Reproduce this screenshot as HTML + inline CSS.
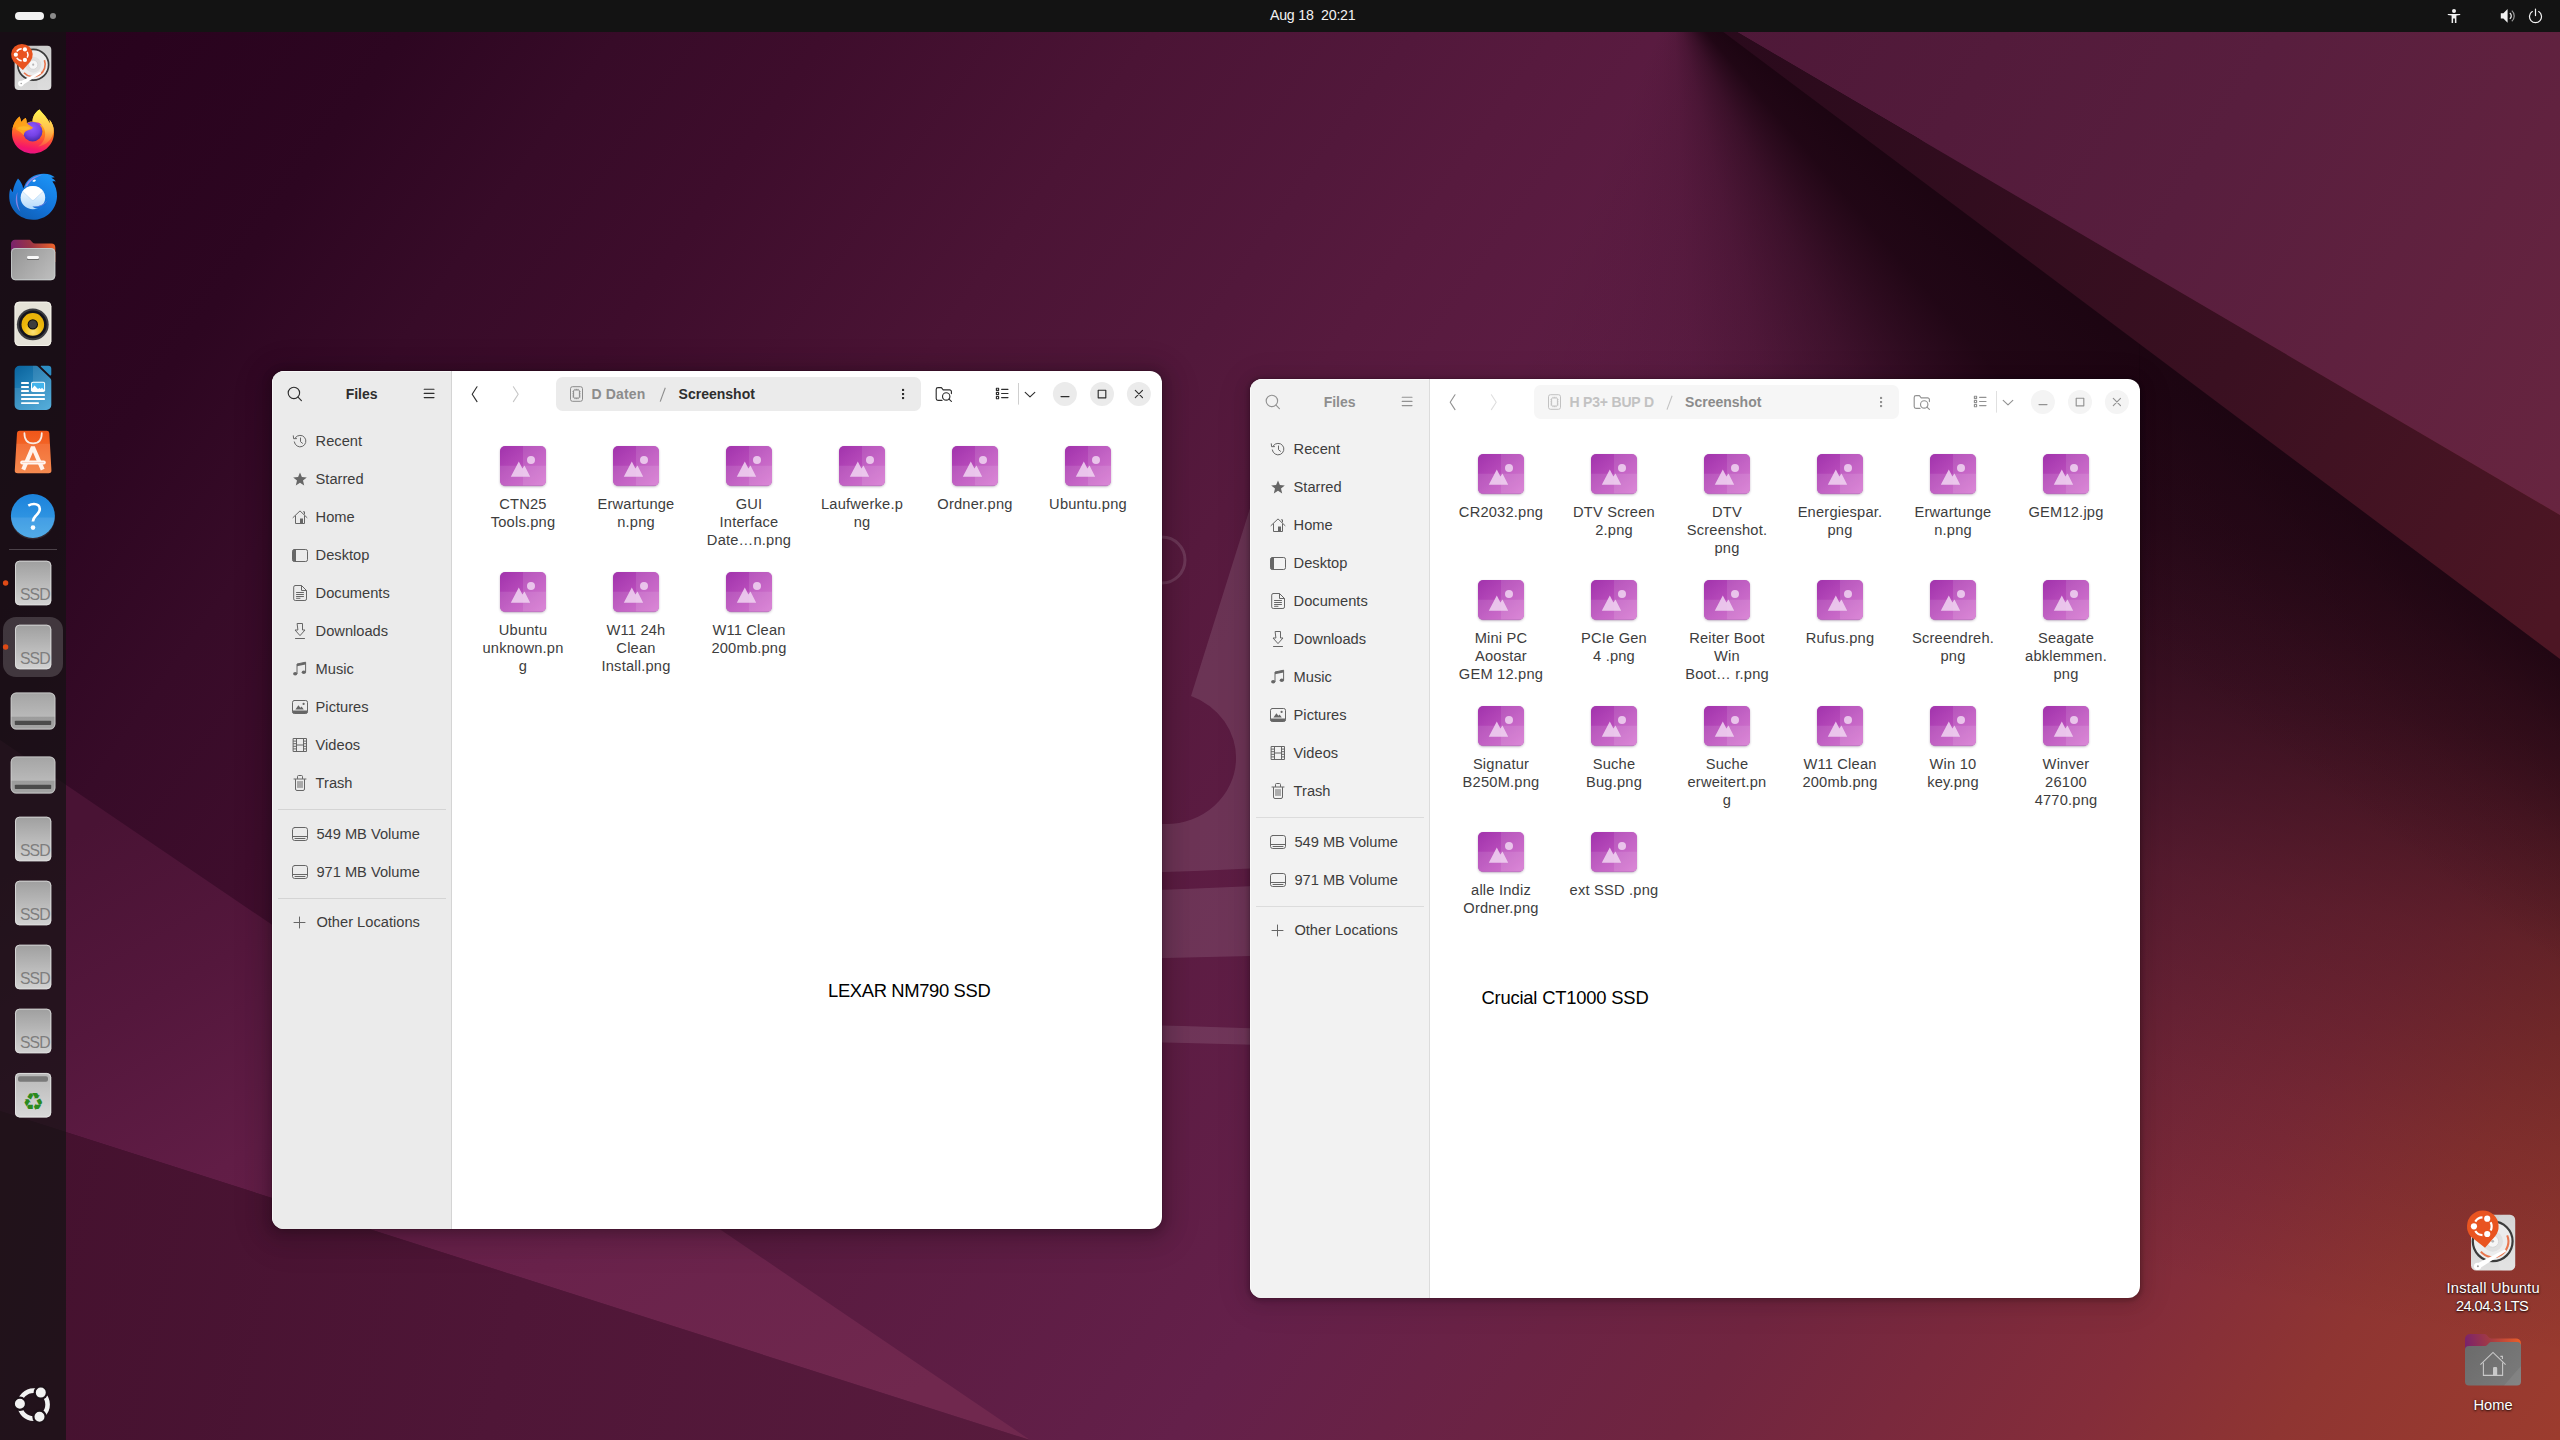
<!DOCTYPE html>
<html lang="en"><head><meta charset="utf-8"><title>Ubuntu Desktop - Files</title>
<style>
html,body{margin:0;padding:0}
body{width:2560px;height:1440px;overflow:hidden;position:relative;background:#4a1435;font-family:'Liberation Sans', sans-serif;-webkit-font-smoothing:antialiased}
#topbar{position:absolute;left:0;top:0;width:2560px;height:32px;background:#131313;z-index:50}
#dock{position:absolute;left:0;top:32px;width:66px;height:1408px;background:rgba(19,19,19,0.7);z-index:40}
#wbase{position:absolute;left:0;top:0;width:2560px;height:1440px;background:linear-gradient(125deg,#26021b 0%,#29031e 4.8%,#2d0621 12%,#370b28 18%,#3e0d2c 23.8%,#4b1435 33%,#52183b 40.3%,#571a3e 44.3%,#64204a 61.1%,#702540 75.1%,#842d3a 86.3%,#8f3532 91.9%,#9c3c2e 100%)}
#wfold{position:absolute;left:0;top:0;width:2560px;height:1440px;clip-path:polygon(1674px -45px,2140px 304px,2140px 1000px,600px 1000px,600px -45px);background:conic-gradient(from 120deg at 1674px -5px,rgba(26,4,16,.97) 0deg,rgba(26,4,16,.97) 6.83deg,rgba(26,4,16,.9) 19.4deg,rgba(26,4,16,.72) 26.8deg,rgba(26,4,16,.5) 34.8deg,rgba(26,4,16,.25) 46.8deg,rgba(26,4,16,.1) 57.8deg,rgba(26,4,16,.03) 71.8deg,rgba(26,4,16,0) 83.8deg,rgba(26,4,16,0) 360deg)}
.win{position:absolute;background:#fff;border-radius:12px;overflow:hidden}
.lab{position:absolute;width:120px;text-align:center;font-size:14.67px;line-height:18px;color:#3d3d3d;white-space:nowrap;letter-spacing:0.2px}
.note{position:absolute;color:#000;white-space:pre;line-height:24px;z-index:30}
</style></head>
<body>
<div id="wbase"></div>
<div id="wfold"></div>
<svg id="wall" width="2560" height="1440" viewBox="0 0 2560 1440" style="position:absolute;left:0;top:0">
<defs>
<linearGradient id="wur" gradientUnits="userSpaceOnUse" x1="1722" y1="32" x2="2560" y2="520">
<stop offset="0" stop-color="#4e1838"/>
<stop offset="0.5" stop-color="#581e3e"/>
<stop offset="1" stop-color="#682540"/>
</linearGradient>
<linearGradient id="wband" gradientUnits="userSpaceOnUse" x1="1722" y1="32" x2="2560" y2="600">
<stop offset="0" stop-color="#2a0a1c"/>
<stop offset="0.6" stop-color="#3a1021"/>
<stop offset="1" stop-color="#4d1624"/>
</linearGradient>
<linearGradient id="wfoldB" gradientUnits="userSpaceOnUse" x1="2350" y1="430" x2="2170" y2="1312">
<stop offset="0" stop-color="#1a0410" stop-opacity="0.9"/>
<stop offset="0.144" stop-color="#1a0410" stop-opacity="0.82"/>
<stop offset="0.3" stop-color="#1a0410" stop-opacity="0.66"/>
<stop offset="0.522" stop-color="#1a0410" stop-opacity="0.35"/>
<stop offset="0.744" stop-color="#1a0410" stop-opacity="0.15"/>
<stop offset="0.967" stop-color="#1a0410" stop-opacity="0"/>
</linearGradient>
<linearGradient id="wfoldC" gradientUnits="userSpaceOnUse" x1="2300" y1="464.6" x2="2150" y2="664.7">
<stop offset="0" stop-color="#1a0410" stop-opacity="0.7"/>
<stop offset="0.24" stop-color="#1a0410" stop-opacity="0.4"/>
<stop offset="0.6" stop-color="#1a0410" stop-opacity="0.15"/>
<stop offset="1" stop-color="#1a0410" stop-opacity="0"/>
</linearGradient>
<linearGradient id="wwedge" gradientUnits="userSpaceOnUse" x1="100" y1="820" x2="551" y2="1601">
<stop offset="0" stop-color="#491334"/>
<stop offset="0.2" stop-color="#54173c"/>
<stop offset="0.4" stop-color="#611d46"/>
<stop offset="0.673" stop-color="#69224b"/>
<stop offset="1" stop-color="#70284e"/>
</linearGradient>
<linearGradient id="wlow" gradientUnits="userSpaceOnUse" x1="0" y1="1200" x2="1030" y2="1440">
<stop offset="0" stop-color="#44112e"/>
<stop offset="0.5" stop-color="#4f1637"/>
<stop offset="1" stop-color="#581b3d"/>
</linearGradient>
</defs>
<polygon points="2139,300 2560,600 2560,1440 2139,1440" fill="url(#wfoldB)"/>
<polygon points="2139,300 2560,600 2560,1440 2139,1440" fill="url(#wfoldC)"/>
<!-- upper-right light area -->
<polygon points="1674,-5 2560,-5 2560,515" fill="url(#wur)"/>
<!-- dark band -->
<polygon points="1674,-5 2560,515 2560,659" fill="url(#wband)"/>
<!-- bottom-left wedge -->
<polygon points="0,740 1030,1440 0,1111" fill="url(#wwedge)"/>
<polygon points="0,1111 1030,1440 0,1440" fill="url(#wlow)"/>
<!-- numbat fragments between windows -->
<g fill="#ffffff" fill-opacity="0.11">
<path d="M1262,470 L1191,696 A70,66 0 0 1 1236,760 A70,66 0 0 1 1165,824 L1100,824 L1100,874 Q1200,872 1300,866 L1300,470 Z"/>
<path d="M1100,892 Q1200,889 1300,884 L1300,955 Q1200,957 1100,960 Z"/>
<path d="M1100,1024 Q1200,1026 1300,1030 L1300,1046 Q1200,1043 1100,1041 Z"/>
</g>
<circle cx="1162" cy="560" r="23" fill="none" stroke="#ffffff" stroke-opacity="0.13" stroke-width="3"/>
</svg>

<svg width="0" height="0" style="position:absolute"><defs><linearGradient id="gimg" x1="0" y1="0" x2="1" y2="1"><stop offset="0" stop-color="#a133ac"/><stop offset="1" stop-color="#d268cc"/></linearGradient></defs></svg>
<svg width="140" height="200" viewBox="2430 1200 140 200" style="position:absolute;left:2430px;top:1200px">
<defs>
<linearGradient id="gdisk2" x1="0" y1="0" x2="0" y2="1"><stop offset="0" stop-color="#cfcfcf"/><stop offset="1" stop-color="#e0e0e0"/></linearGradient>
<linearGradient id="ghback" gradientUnits="userSpaceOnUse" x1="2465" y1="1350" x2="2521" y2="1338"><stop offset="0" stop-color="#77216f"/><stop offset="0.45" stop-color="#a23a44"/><stop offset="1" stop-color="#ee5f28"/></linearGradient>
<linearGradient id="ghfront" gradientUnits="userSpaceOnUse" x1="2468" y1="1344" x2="2518" y2="1386"><stop offset="0" stop-color="#6b6b6b"/><stop offset="1" stop-color="#7b7b7b"/></linearGradient>
</defs>
<g>
<rect x="2471" y="1214.8" width="44.2" height="55.8" rx="5.2" fill="url(#gdisk2)"/>
<rect x="2498.4" y="1214.8" width="16.8" height="55.8" rx="5.2" fill="#ffffff" fill-opacity="0.12"/>
<circle cx="2492.7" cy="1241.3" r="19.9" fill="#ececec" stroke="#3b3b3b" stroke-width="2.20"/>
<circle cx="2492.7" cy="1241.3" r="10.35" fill="#e0e0e0"/>
<circle cx="2492.7" cy="1241.3" r="5.97" fill="#f6f6f6" stroke="#d2d2d2" stroke-width="0.8"/>
<circle cx="2492.7" cy="1241.3" r="1.39" fill="#b5b5b5"/>
<path d="M2507.2,1235.3 A15.7,15.7 0 0 1 2480.8,1251.6" fill="none" stroke="#e9764e" stroke-width="2.07"/>
<path d="M2478.95,1268.65 L2506.31,1251.27 L2505.09,1249.13 L2476.25,1263.95 Z" fill="#ffffff"/>
<circle cx="2477.6" cy="1266.3" r="3.62" fill="#ffffff"/>
<circle cx="2477.9" cy="1266.3" r="0.97" fill="#9a9a9a"/>
<path d="M2470.70,1236.46 A15.8,15.8 0 1 1 2494.90,1236.46 L2485,1247.8 Z" fill="#e95420"/>
<path d="M2475.30,1221.61 A8.85,8.85 0 0 1 2482.49,1217.46 M2490.61,1222.15 A8.85,8.85 0 0 1 2490.61,1230.45 M2482.49,1235.14 A8.85,8.85 0 0 1 2475.30,1230.99 " fill="none" stroke="#ffffff" stroke-width="2.21"/>
<circle cx="2473.95" cy="1226.30" r="3.08" fill="#fff"/><circle cx="2487.22" cy="1218.64" r="3.08" fill="#fff"/><circle cx="2487.22" cy="1233.96" r="3.08" fill="#fff"/>
</g>
<g>
<path d="M2465,1339 a5,5 0 0 1 5,-5 H2484 c1.6,0 2.4,0.5 3.2,1.5 l1.6,1.8 c0.7,0.8 1.4,1.1 2.6,1.1 H2516 a5,5 0 0 1 5,5 V1362 H2465 Z" fill="url(#ghback)"/>
<path d="M2465,1350 a4,4 0 0 1 4,-4 H2484.4 c1.4,0 2.2,-0.4 3,-1.2 l1.4,-1.5 c0.8,-0.9 1.6,-1.3 3,-1.3 H2517 a4,4 0 0 1 4,4 V1381.6 a4,4 0 0 1 -4,4 H2469 a4,4 0 0 1 -4,-4 Z" fill="url(#ghfront)"/>
<path d="M2521,1366 V1381.6 a4,4 0 0 1 -4,4 H2504 Z" fill="#ffffff" fill-opacity="0.07"/>
<g fill="none" stroke="#c9c9c9" stroke-width="1.1" stroke-linejoin="miter">
<path d="M2480.4,1364.6 L2493,1352.4 L2505.6,1364.6"/>
<path d="M2483.4,1362.4 V1375.4 H2502.6 V1362.4"/>
<path d="M2500.4,1356.4 H2502.4 V1359"/>
</g>
<path d="M2493,1375.4 V1368.2 a1.2,1.2 0 0 1 1.2,-1.2 H2496 a1.2,1.2 0 0 1 1.2,1.2 V1375.4 Z" fill="#c9c9c9"/>
</g>
</svg>
<div style="position:absolute;top:1279.12px;line-height:18px;font-size:14.67px;font-weight:400;color:#ffffff;white-space:pre;letter-spacing:0.27px;left:2293.20px;width:400px;text-align:center;text-shadow:0 1px 2px rgba(0,0,0,0.75),0 0 3px rgba(0,0,0,0.45);">Install Ubuntu</div>
<div style="position:absolute;top:1297.02px;line-height:18px;font-size:14.67px;font-weight:400;color:#ffffff;white-space:pre;letter-spacing:-0.6px;left:2292.10px;width:400px;text-align:center;text-shadow:0 1px 2px rgba(0,0,0,0.75),0 0 3px rgba(0,0,0,0.45);">24.04.3 LTS</div>
<div style="position:absolute;top:1396.02px;line-height:18px;font-size:14.67px;font-weight:400;color:#ffffff;white-space:pre;left:2293.00px;width:400px;text-align:center;text-shadow:0 1px 2px rgba(0,0,0,0.75),0 0 3px rgba(0,0,0,0.45);">Home</div>
<div class="win" style="left:1250px;top:379px;width:890px;height:919px;box-shadow:0 0 0 1px rgba(0,0,0,0.06), 0 1px 3px 3px rgba(0,0,0,0.12), 0 2px 14px 5px rgba(0,0,0,0.08), 0 4px 28px 12px rgba(0,0,0,0.05);z-index:10">
<div style="position:absolute;left:0;top:0;width:179px;height:919px;background:#f2f2f2;border-right:1px solid #dcdcdc;box-shadow:inset 1px 1px 0 rgba(255,255,255,0.6)"></div>
<svg width="890" height="46" viewBox="0 0 890 46" style="position:absolute;left:0;top:0">
<circle cx="21.9" cy="21.9" r="5.7" fill="none" stroke="#929292" stroke-width="1.15" stroke-linecap="round" stroke-linejoin="round"/><path d="M26,26.2 L29.4,29.6" fill="none" stroke="#929292" stroke-width="1.15" stroke-linecap="round" stroke-linejoin="round" stroke-width="1.5"/>
<path d="M152.2,18.2 H162 M152.2,22.4 H162 M152.2,26.6 H162" fill="none" stroke="#929292" stroke-width="1.15" stroke-linecap="round" stroke-linejoin="round" stroke-width="1.05"/>
<path d="M205,15.8 L200.2,23.2 L205,30.6" fill="none" stroke="#929292" stroke-width="1.15" stroke-linecap="round" stroke-linejoin="round" stroke-width="1.1"/>
<path d="M241.4,15.8 L246.2,23.2 L241.4,30.6" fill="none" stroke="#dedede" stroke-width="1.1" stroke-linecap="round" stroke-linejoin="round"/>
<rect x="284" y="6" width="365" height="34" rx="6.5" fill="#f6f6f6"/>
<g fill="none" stroke="#c2c2c2" stroke-width="1">
<rect x="298.5" y="15.7" width="12" height="14.6" rx="2"/>
<rect x="301.6" y="19" width="5.8" height="8" rx="0.8"/>
<path d="M300.4,20.5 h1.2 M300.4,22.3 h1.2 M300.4,24.1 h1.2 M300.4,25.9 h1.2 M307.4,20.5 h1.2 M307.4,22.3 h1.2 M307.4,24.1 h1.2 M307.4,25.9 h1.2 M303,17.8 v1.2 M304.5,17.8 v1.2 M306,17.8 v1.2 M303,27 v1.2 M304.5,27 v1.2 M306,27 v1.2" stroke-width="0.8"/>
</g>
<path d="M422.1,16.8 L417.0,30.6" fill="none" stroke="#c2c2c2" stroke-width="1.1"/>
<g fill="#929292"><rect x="630" y="17.9" width="2.1" height="2.1"/><rect x="630" y="22" width="2.1" height="2.1"/><rect x="630" y="26" width="2.1" height="2.1"/></g>
<path d="M670,29.4 H666 a1.8,1.8 0 0 1 -1.8,-1.8 V18.4 a1.8,1.8 0 0 1 1.8,-1.8 H669.4 l1.8,2.2 H677.6 a1.8,1.8 0 0 1 1.8,1.8 V22.6" fill="none" stroke="#929292" stroke-width="1.15" stroke-linecap="round" stroke-linejoin="round" stroke-width="1.05"/>
<circle cx="674.2" cy="25.4" r="3.7" fill="none" stroke="#929292" stroke-width="1.15" stroke-linecap="round" stroke-linejoin="round" stroke-width="1.05"/><path d="M677,28.2 L679.4,30.4" fill="none" stroke="#929292" stroke-width="1.15" stroke-linecap="round" stroke-linejoin="round" stroke-width="1.05"/>
<g fill="none" stroke="#929292" stroke-width="1.15" stroke-linecap="round" stroke-linejoin="round" stroke-width="1.0"><rect x="724.4" y="17.2" width="2.2" height="2.2"/><rect x="724.4" y="21.4" width="2.2" height="2.2"/><rect x="724.4" y="25.5" width="2.2" height="2.2"/><path d="M729.6,18.3 H736 M729.6,22.5 H736 M729.6,26.6 H736"/></g>
<rect x="746" y="12" width="1" height="21.6" fill="#e0e0e0"/>
<path d="M753.2,21.4 L758,25.8 L762.8,21.4" fill="none" stroke="#929292" stroke-width="1.15" stroke-linecap="round" stroke-linejoin="round" stroke-width="1.1"/>
<circle cx="792.9" cy="23" r="12" fill="#f4f4f4"/><circle cx="830" cy="23" r="12" fill="#f4f4f4"/><circle cx="866.9" cy="23" r="12" fill="#f4f4f4"/>
<path d="M789,25.6 H797" fill="none" stroke="#929292" stroke-width="1.15" stroke-linecap="round" stroke-linejoin="round" stroke-width="1.1"/>
<rect x="826.2" y="19.2" width="7.6" height="7.6" fill="none" stroke="#929292" stroke-width="1.15" stroke-linecap="round" stroke-linejoin="round" stroke-width="1.1" stroke-linejoin="miter"/>
<path d="M863.3,19.4 L870.5,26.6 M870.5,19.4 L863.3,26.6" fill="none" stroke="#929292" stroke-width="1.15" stroke-linecap="round" stroke-linejoin="round" stroke-width="1.15"/>
</svg>
<div style="position:absolute;top:13.75px;line-height:18px;font-size:14px;font-weight:700;color:#8e8e8e;white-space:pre;left:-110.40px;width:400px;text-align:center;">Files</div>
<div style="position:absolute;top:13.95px;line-height:18px;font-size:14px;font-weight:700;color:#c2c2c2;white-space:pre;letter-spacing:-0.2px;left:319.50px;">H P3+ BUP D</div>
<div style="position:absolute;top:13.95px;line-height:18px;font-size:14px;font-weight:700;color:#8b8b8b;white-space:pre;left:435.10px;">Screenshot</div>
<div style="position:absolute;left:20px;top:62px;width:16px;height:16px"><svg width="16" height="16" viewBox="0 0 16 16" style="position:absolute;left:0;top:0;overflow:visible"><path d="M2.3,8.9 A5.8,5.8 0 1 0 3.4,4.6" fill="none" stroke="#666666" stroke-width="1" stroke-linecap="round" stroke-linejoin="round"/><path d="M1.3,2.8 L1.6,5.7 L4.5,5.6" fill="none" stroke="#666666" stroke-width="1" stroke-linecap="round" stroke-linejoin="round"/><path d="M8.5,5 V8.7 L10.5,10.3" fill="none" stroke="#666666" stroke-width="1" stroke-linecap="round" stroke-linejoin="round"/></svg></div>
<div style="position:absolute;top:60.72px;line-height:18px;font-size:14.67px;font-weight:400;color:#3d3d3d;white-space:pre;left:43.60px;">Recent</div>
<div style="position:absolute;left:20px;top:100px;width:16px;height:16px"><svg width="16" height="16" viewBox="0 0 16 16" style="position:absolute;left:0;top:0;overflow:visible"><path d="M8,1.5 L9.9,6.1 L14.8,6.4 L11,9.6 L12.2,14.4 L8,11.8 L3.8,14.4 L5,9.6 L1.2,6.4 L6.1,6.1 Z" fill="#666666"/></svg></div>
<div style="position:absolute;top:98.72px;line-height:18px;font-size:14.67px;font-weight:400;color:#3d3d3d;white-space:pre;left:43.60px;">Starred</div>
<div style="position:absolute;left:20px;top:138px;width:16px;height:16px"><svg width="16" height="16" viewBox="0 0 16 16" style="position:absolute;left:0;top:0;overflow:visible"><path d="M1,8.6 L8,1.9 L15,8.6" fill="none" stroke="#666666" stroke-width="1" stroke-linecap="round" stroke-linejoin="round"/><path d="M3.5,7 V14.5 H12.5 V7" fill="none" stroke="#666666" stroke-width="1" stroke-linecap="round" stroke-linejoin="round"/><rect x="8" y="9.5" width="3" height="5" fill="#666666"/><path d="M11.5,2.8 H12.5 V5" fill="none" stroke="#666666" stroke-width="1" stroke-linecap="round" stroke-linejoin="round"/></svg></div>
<div style="position:absolute;top:136.72px;line-height:18px;font-size:14.67px;font-weight:400;color:#3d3d3d;white-space:pre;left:43.60px;">Home</div>
<div style="position:absolute;left:20px;top:176px;width:16px;height:16px"><svg width="16" height="16" viewBox="0 0 16 16" style="position:absolute;left:0;top:0;overflow:visible"><rect x="0.5" y="2.5" width="15" height="12" rx="1.8" fill="none" stroke="#666666" stroke-width="1" stroke-linecap="round" stroke-linejoin="round"/><path d="M0.5,4.3 a1.8,1.8 0 0 1 1.8,-1.8 H4 V14.5 H2.3 a1.8,1.8 0 0 1 -1.8,-1.8 Z" fill="#666666"/></svg></div>
<div style="position:absolute;top:174.72px;line-height:18px;font-size:14.67px;font-weight:400;color:#3d3d3d;white-space:pre;left:43.60px;">Desktop</div>
<div style="position:absolute;left:20px;top:214px;width:16px;height:16px"><svg width="16" height="16" viewBox="0 0 16 16" style="position:absolute;left:0;top:0;overflow:visible"><path d="M3.3,0.5 H9.5 L14.5,5.5 V13.9 a1.6,1.6 0 0 1 -1.6,1.6 H3.3 a1.6,1.6 0 0 1 -1.6,-1.6 V2.1 a1.6,1.6 0 0 1 1.6,-1.6 Z" fill="none" stroke="#666666" stroke-width="1" stroke-linecap="round" stroke-linejoin="round"/><path d="M9.5,0.8 V5.5 H14.2" fill="none" stroke="#666666" stroke-width="1" stroke-linecap="round" stroke-linejoin="round"/><path d="M4.5,7.5 H11.5 M4.5,9.5 H11.5 M4.5,11.5 H11.5 M4.5,13.3 H8" fill="none" stroke="#666666" stroke-width="1" stroke-linecap="round" stroke-linejoin="round" stroke-width="0.9"/></svg></div>
<div style="position:absolute;top:212.72px;line-height:18px;font-size:14.67px;font-weight:400;color:#3d3d3d;white-space:pre;left:43.60px;">Documents</div>
<div style="position:absolute;left:20px;top:252px;width:16px;height:16px"><svg width="16" height="16" viewBox="0 0 16 16" style="position:absolute;left:0;top:0;overflow:visible"><path d="M5.5,0.5 H10.5 V7 H13 L8,12.6 L3,7 H5.5 Z" fill="none" stroke="#666666" stroke-width="1" stroke-linecap="round" stroke-linejoin="round"/><path d="M3.5,15.5 H12.5" fill="none" stroke="#666666" stroke-width="1" stroke-linecap="round" stroke-linejoin="round"/></svg></div>
<div style="position:absolute;top:250.72px;line-height:18px;font-size:14.67px;font-weight:400;color:#3d3d3d;white-space:pre;left:43.60px;">Downloads</div>
<div style="position:absolute;left:20px;top:290px;width:16px;height:16px"><svg width="16" height="16" viewBox="0 0 16 16" style="position:absolute;left:0;top:0;overflow:visible"><path d="M5,12.6 V3 L13.6,1.2 V11" fill="none" stroke="#666666" stroke-width="1" stroke-linecap="round" stroke-linejoin="round" stroke-width="1.2"/><path d="M5,3 L13.6,1.2 V3.4 L5,5.2 Z" fill="#666666"/><ellipse cx="3.2" cy="12.8" rx="2.1" ry="1.7" fill="#666666"/><ellipse cx="11.8" cy="11.3" rx="2.1" ry="1.7" fill="#666666"/></svg></div>
<div style="position:absolute;top:288.72px;line-height:18px;font-size:14.67px;font-weight:400;color:#3d3d3d;white-space:pre;left:43.60px;">Music</div>
<div style="position:absolute;left:20px;top:328px;width:16px;height:16px"><svg width="16" height="16" viewBox="0 0 16 16" style="position:absolute;left:0;top:0;overflow:visible"><rect x="0.5" y="1.5" width="15" height="13" rx="1.8" fill="none" stroke="#666666" stroke-width="1" stroke-linecap="round" stroke-linejoin="round"/><path d="M0.5,11.5 H15.5 V12.7 a1.8,1.8 0 0 1 -1.8,1.8 H2.3 a1.8,1.8 0 0 1 -1.8,-1.8 Z" fill="#666666"/><path d="M3.4,10.4 L6.4,6.2 L8.4,8.8 L9.6,7.6 L11.8,10.4 Z" fill="#666666"/><circle cx="11.6" cy="4.9" r="1.1" fill="#666666"/></svg></div>
<div style="position:absolute;top:326.72px;line-height:18px;font-size:14.67px;font-weight:400;color:#3d3d3d;white-space:pre;left:43.60px;">Pictures</div>
<div style="position:absolute;left:20px;top:366px;width:16px;height:16px"><svg width="16" height="16" viewBox="0 0 16 16" style="position:absolute;left:0;top:0;overflow:visible"><rect x="1.5" y="1.5" width="13" height="13" fill="none" stroke="#666666" stroke-width="1" stroke-linecap="round" stroke-linejoin="round"/><path d="M4.5,1.5 V14.5 M11.5,1.5 V14.5 M4.5,8 H11.5" fill="none" stroke="#666666" stroke-width="1" stroke-linecap="round" stroke-linejoin="round"/><path d="M1.5,4.1 H4.5 M1.5,6.7 H4.5 M1.5,9.3 H4.5 M1.5,11.9 H4.5 M11.5,4.1 H14.5 M11.5,6.7 H14.5 M11.5,9.3 H14.5 M11.5,11.9 H14.5" fill="none" stroke="#666666" stroke-width="1" stroke-linecap="round" stroke-linejoin="round" stroke-width="0.9"/></svg></div>
<div style="position:absolute;top:364.72px;line-height:18px;font-size:14.67px;font-weight:400;color:#3d3d3d;white-space:pre;left:43.60px;">Videos</div>
<div style="position:absolute;left:20px;top:404px;width:16px;height:16px"><svg width="16" height="16" viewBox="0 0 16 16" style="position:absolute;left:0;top:0;overflow:visible"><path d="M3.5,4.5 V14 a1.5,1.5 0 0 0 1.5,1.5 H11 a1.5,1.5 0 0 0 1.5,-1.5 V4.5" fill="none" stroke="#666666" stroke-width="1" stroke-linecap="round" stroke-linejoin="round"/><path d="M2,4 H14" fill="none" stroke="#666666" stroke-width="1" stroke-linecap="round" stroke-linejoin="round" stroke-width="1.4"/><path d="M5.5,3.5 V1.5 a1,1 0 0 1 1,-1 H9.5 a1,1 0 0 1 1,1 V3.5" fill="none" stroke="#666666" stroke-width="1" stroke-linecap="round" stroke-linejoin="round"/><path d="M6,6.5 V12.5 M8,6.5 V12.5 M10,6.5 V12.5" fill="none" stroke="#666666" stroke-width="1" stroke-linecap="round" stroke-linejoin="round"/></svg></div>
<div style="position:absolute;top:402.72px;line-height:18px;font-size:14.67px;font-weight:400;color:#3d3d3d;white-space:pre;left:43.60px;">Trash</div>
<div style="position:absolute;left:20px;top:455px;width:16px;height:16px"><svg width="16" height="16" viewBox="0 0 16 16" style="position:absolute;left:0;top:0;overflow:visible"><rect x="0.5" y="1.5" width="15" height="13" rx="2.2" fill="none" stroke="#666666" stroke-width="1" stroke-linecap="round" stroke-linejoin="round"/><path d="M0.5,10.5 H15.5" fill="none" stroke="#666666" stroke-width="1" stroke-linecap="round" stroke-linejoin="round"/><path d="M3,12.5 H13" fill="none" stroke="#666666" stroke-width="1" stroke-linecap="round" stroke-linejoin="round" stroke-width="0.9"/></svg></div>
<div style="position:absolute;top:453.62px;line-height:18px;font-size:14.67px;font-weight:400;color:#3d3d3d;white-space:pre;left:44.40px;">549 MB Volume</div>
<div style="position:absolute;left:20px;top:493px;width:16px;height:16px"><svg width="16" height="16" viewBox="0 0 16 16" style="position:absolute;left:0;top:0;overflow:visible"><rect x="0.5" y="1.5" width="15" height="13" rx="2.2" fill="none" stroke="#666666" stroke-width="1" stroke-linecap="round" stroke-linejoin="round"/><path d="M0.5,10.5 H15.5" fill="none" stroke="#666666" stroke-width="1" stroke-linecap="round" stroke-linejoin="round"/><path d="M3,12.5 H13" fill="none" stroke="#666666" stroke-width="1" stroke-linecap="round" stroke-linejoin="round" stroke-width="0.9"/></svg></div>
<div style="position:absolute;top:491.62px;line-height:18px;font-size:14.67px;font-weight:400;color:#3d3d3d;white-space:pre;left:44.40px;">971 MB Volume</div>
<div style="position:absolute;left:20px;top:544px;width:16px;height:16px"><svg width="16" height="16" viewBox="0 0 16 16" style="position:absolute;left:0;top:0;overflow:visible"><path d="M7.5,2 V13 M2,7.5 H13" fill="none" stroke="#666666" stroke-width="1" stroke-linecap="round" stroke-linejoin="round" stroke-linecap="butt"/></svg></div>
<div style="position:absolute;top:542.42px;line-height:18px;font-size:14.67px;font-weight:400;color:#3d3d3d;white-space:pre;left:44.40px;">Other Locations</div>
<div style="position:absolute;left:6px;top:438px;width:168px;height:1px;background:#dcdcdc"></div>
<div style="position:absolute;left:6px;top:527px;width:168px;height:1px;background:#dcdcdc"></div>
<div style="position:absolute;left:228px;top:75px;width:46px;height:40px;filter:drop-shadow(0 1px 1.2px rgba(60,20,70,0.28))"><svg width="52" height="48" viewBox="-3 -3 52 48" style="position:absolute;left:-3px;top:-3px">
<rect x="0.6" y="1.4" width="44.8" height="39.2" rx="5.4" fill="#5a1a66" fill-opacity="0.14"/>
<rect x="0" y="0.5" width="46" height="39.6" rx="5.2" fill="#a535ad" fill-opacity="0.5"/>
<rect x="0" y="0" width="46" height="39.6" rx="5" fill="url(#gimg)"/>
<path d="M23,0 H41 a5,5 0 0 1 5,5 V34.6 a5,5 0 0 1 -5,5 H23 Z" fill="#fff" fill-opacity="0.11"/>
<path d="M0,19.8 H46 V34.6 a5,5 0 0 1 -5,5 H5 a5,5 0 0 1 -5,-5 Z" fill="#fff" fill-opacity="0.11"/>
<path d="M10.8,30.8 L18.8,15.6 L22.4,22.6 L24.5,19.6 L30.2,30.8 Z" fill="#f0d4f1" fill-opacity="0.86"/>
<circle cx="31" cy="14" r="4" fill="#f0d4f1" fill-opacity="0.86"/>
</svg></div>
<div class="lab" style="left:191px;top:123.9px">CR2032.png</div>
<div style="position:absolute;left:341px;top:75px;width:46px;height:40px;filter:drop-shadow(0 1px 1.2px rgba(60,20,70,0.28))"><svg width="52" height="48" viewBox="-3 -3 52 48" style="position:absolute;left:-3px;top:-3px">
<rect x="0.6" y="1.4" width="44.8" height="39.2" rx="5.4" fill="#5a1a66" fill-opacity="0.14"/>
<rect x="0" y="0.5" width="46" height="39.6" rx="5.2" fill="#a535ad" fill-opacity="0.5"/>
<rect x="0" y="0" width="46" height="39.6" rx="5" fill="url(#gimg)"/>
<path d="M23,0 H41 a5,5 0 0 1 5,5 V34.6 a5,5 0 0 1 -5,5 H23 Z" fill="#fff" fill-opacity="0.11"/>
<path d="M0,19.8 H46 V34.6 a5,5 0 0 1 -5,5 H5 a5,5 0 0 1 -5,-5 Z" fill="#fff" fill-opacity="0.11"/>
<path d="M10.8,30.8 L18.8,15.6 L22.4,22.6 L24.5,19.6 L30.2,30.8 Z" fill="#f0d4f1" fill-opacity="0.86"/>
<circle cx="31" cy="14" r="4" fill="#f0d4f1" fill-opacity="0.86"/>
</svg></div>
<div class="lab" style="left:304px;top:123.9px">DTV Screen<br>2.png</div>
<div style="position:absolute;left:454px;top:75px;width:46px;height:40px;filter:drop-shadow(0 1px 1.2px rgba(60,20,70,0.28))"><svg width="52" height="48" viewBox="-3 -3 52 48" style="position:absolute;left:-3px;top:-3px">
<rect x="0.6" y="1.4" width="44.8" height="39.2" rx="5.4" fill="#5a1a66" fill-opacity="0.14"/>
<rect x="0" y="0.5" width="46" height="39.6" rx="5.2" fill="#a535ad" fill-opacity="0.5"/>
<rect x="0" y="0" width="46" height="39.6" rx="5" fill="url(#gimg)"/>
<path d="M23,0 H41 a5,5 0 0 1 5,5 V34.6 a5,5 0 0 1 -5,5 H23 Z" fill="#fff" fill-opacity="0.11"/>
<path d="M0,19.8 H46 V34.6 a5,5 0 0 1 -5,5 H5 a5,5 0 0 1 -5,-5 Z" fill="#fff" fill-opacity="0.11"/>
<path d="M10.8,30.8 L18.8,15.6 L22.4,22.6 L24.5,19.6 L30.2,30.8 Z" fill="#f0d4f1" fill-opacity="0.86"/>
<circle cx="31" cy="14" r="4" fill="#f0d4f1" fill-opacity="0.86"/>
</svg></div>
<div class="lab" style="left:417px;top:123.9px">DTV<br>Screenshot.<br>png</div>
<div style="position:absolute;left:567px;top:75px;width:46px;height:40px;filter:drop-shadow(0 1px 1.2px rgba(60,20,70,0.28))"><svg width="52" height="48" viewBox="-3 -3 52 48" style="position:absolute;left:-3px;top:-3px">
<rect x="0.6" y="1.4" width="44.8" height="39.2" rx="5.4" fill="#5a1a66" fill-opacity="0.14"/>
<rect x="0" y="0.5" width="46" height="39.6" rx="5.2" fill="#a535ad" fill-opacity="0.5"/>
<rect x="0" y="0" width="46" height="39.6" rx="5" fill="url(#gimg)"/>
<path d="M23,0 H41 a5,5 0 0 1 5,5 V34.6 a5,5 0 0 1 -5,5 H23 Z" fill="#fff" fill-opacity="0.11"/>
<path d="M0,19.8 H46 V34.6 a5,5 0 0 1 -5,5 H5 a5,5 0 0 1 -5,-5 Z" fill="#fff" fill-opacity="0.11"/>
<path d="M10.8,30.8 L18.8,15.6 L22.4,22.6 L24.5,19.6 L30.2,30.8 Z" fill="#f0d4f1" fill-opacity="0.86"/>
<circle cx="31" cy="14" r="4" fill="#f0d4f1" fill-opacity="0.86"/>
</svg></div>
<div class="lab" style="left:530px;top:123.9px">Energiespar.<br>png</div>
<div style="position:absolute;left:680px;top:75px;width:46px;height:40px;filter:drop-shadow(0 1px 1.2px rgba(60,20,70,0.28))"><svg width="52" height="48" viewBox="-3 -3 52 48" style="position:absolute;left:-3px;top:-3px">
<rect x="0.6" y="1.4" width="44.8" height="39.2" rx="5.4" fill="#5a1a66" fill-opacity="0.14"/>
<rect x="0" y="0.5" width="46" height="39.6" rx="5.2" fill="#a535ad" fill-opacity="0.5"/>
<rect x="0" y="0" width="46" height="39.6" rx="5" fill="url(#gimg)"/>
<path d="M23,0 H41 a5,5 0 0 1 5,5 V34.6 a5,5 0 0 1 -5,5 H23 Z" fill="#fff" fill-opacity="0.11"/>
<path d="M0,19.8 H46 V34.6 a5,5 0 0 1 -5,5 H5 a5,5 0 0 1 -5,-5 Z" fill="#fff" fill-opacity="0.11"/>
<path d="M10.8,30.8 L18.8,15.6 L22.4,22.6 L24.5,19.6 L30.2,30.8 Z" fill="#f0d4f1" fill-opacity="0.86"/>
<circle cx="31" cy="14" r="4" fill="#f0d4f1" fill-opacity="0.86"/>
</svg></div>
<div class="lab" style="left:643px;top:123.9px">Erwartunge<br>n.png</div>
<div style="position:absolute;left:793px;top:75px;width:46px;height:40px;filter:drop-shadow(0 1px 1.2px rgba(60,20,70,0.28))"><svg width="52" height="48" viewBox="-3 -3 52 48" style="position:absolute;left:-3px;top:-3px">
<rect x="0.6" y="1.4" width="44.8" height="39.2" rx="5.4" fill="#5a1a66" fill-opacity="0.14"/>
<rect x="0" y="0.5" width="46" height="39.6" rx="5.2" fill="#a535ad" fill-opacity="0.5"/>
<rect x="0" y="0" width="46" height="39.6" rx="5" fill="url(#gimg)"/>
<path d="M23,0 H41 a5,5 0 0 1 5,5 V34.6 a5,5 0 0 1 -5,5 H23 Z" fill="#fff" fill-opacity="0.11"/>
<path d="M0,19.8 H46 V34.6 a5,5 0 0 1 -5,5 H5 a5,5 0 0 1 -5,-5 Z" fill="#fff" fill-opacity="0.11"/>
<path d="M10.8,30.8 L18.8,15.6 L22.4,22.6 L24.5,19.6 L30.2,30.8 Z" fill="#f0d4f1" fill-opacity="0.86"/>
<circle cx="31" cy="14" r="4" fill="#f0d4f1" fill-opacity="0.86"/>
</svg></div>
<div class="lab" style="left:756px;top:123.9px">GEM12.jpg</div>
<div style="position:absolute;left:228px;top:201px;width:46px;height:40px;filter:drop-shadow(0 1px 1.2px rgba(60,20,70,0.28))"><svg width="52" height="48" viewBox="-3 -3 52 48" style="position:absolute;left:-3px;top:-3px">
<rect x="0.6" y="1.4" width="44.8" height="39.2" rx="5.4" fill="#5a1a66" fill-opacity="0.14"/>
<rect x="0" y="0.5" width="46" height="39.6" rx="5.2" fill="#a535ad" fill-opacity="0.5"/>
<rect x="0" y="0" width="46" height="39.6" rx="5" fill="url(#gimg)"/>
<path d="M23,0 H41 a5,5 0 0 1 5,5 V34.6 a5,5 0 0 1 -5,5 H23 Z" fill="#fff" fill-opacity="0.11"/>
<path d="M0,19.8 H46 V34.6 a5,5 0 0 1 -5,5 H5 a5,5 0 0 1 -5,-5 Z" fill="#fff" fill-opacity="0.11"/>
<path d="M10.8,30.8 L18.8,15.6 L22.4,22.6 L24.5,19.6 L30.2,30.8 Z" fill="#f0d4f1" fill-opacity="0.86"/>
<circle cx="31" cy="14" r="4" fill="#f0d4f1" fill-opacity="0.86"/>
</svg></div>
<div class="lab" style="left:191px;top:249.9px">Mini PC<br>Aoostar<br>GEM 12.png</div>
<div style="position:absolute;left:341px;top:201px;width:46px;height:40px;filter:drop-shadow(0 1px 1.2px rgba(60,20,70,0.28))"><svg width="52" height="48" viewBox="-3 -3 52 48" style="position:absolute;left:-3px;top:-3px">
<rect x="0.6" y="1.4" width="44.8" height="39.2" rx="5.4" fill="#5a1a66" fill-opacity="0.14"/>
<rect x="0" y="0.5" width="46" height="39.6" rx="5.2" fill="#a535ad" fill-opacity="0.5"/>
<rect x="0" y="0" width="46" height="39.6" rx="5" fill="url(#gimg)"/>
<path d="M23,0 H41 a5,5 0 0 1 5,5 V34.6 a5,5 0 0 1 -5,5 H23 Z" fill="#fff" fill-opacity="0.11"/>
<path d="M0,19.8 H46 V34.6 a5,5 0 0 1 -5,5 H5 a5,5 0 0 1 -5,-5 Z" fill="#fff" fill-opacity="0.11"/>
<path d="M10.8,30.8 L18.8,15.6 L22.4,22.6 L24.5,19.6 L30.2,30.8 Z" fill="#f0d4f1" fill-opacity="0.86"/>
<circle cx="31" cy="14" r="4" fill="#f0d4f1" fill-opacity="0.86"/>
</svg></div>
<div class="lab" style="left:304px;top:249.9px">PCIe Gen<br>4 .png</div>
<div style="position:absolute;left:454px;top:201px;width:46px;height:40px;filter:drop-shadow(0 1px 1.2px rgba(60,20,70,0.28))"><svg width="52" height="48" viewBox="-3 -3 52 48" style="position:absolute;left:-3px;top:-3px">
<rect x="0.6" y="1.4" width="44.8" height="39.2" rx="5.4" fill="#5a1a66" fill-opacity="0.14"/>
<rect x="0" y="0.5" width="46" height="39.6" rx="5.2" fill="#a535ad" fill-opacity="0.5"/>
<rect x="0" y="0" width="46" height="39.6" rx="5" fill="url(#gimg)"/>
<path d="M23,0 H41 a5,5 0 0 1 5,5 V34.6 a5,5 0 0 1 -5,5 H23 Z" fill="#fff" fill-opacity="0.11"/>
<path d="M0,19.8 H46 V34.6 a5,5 0 0 1 -5,5 H5 a5,5 0 0 1 -5,-5 Z" fill="#fff" fill-opacity="0.11"/>
<path d="M10.8,30.8 L18.8,15.6 L22.4,22.6 L24.5,19.6 L30.2,30.8 Z" fill="#f0d4f1" fill-opacity="0.86"/>
<circle cx="31" cy="14" r="4" fill="#f0d4f1" fill-opacity="0.86"/>
</svg></div>
<div class="lab" style="left:417px;top:249.9px">Reiter Boot<br>Win<br>Boot… r.png</div>
<div style="position:absolute;left:567px;top:201px;width:46px;height:40px;filter:drop-shadow(0 1px 1.2px rgba(60,20,70,0.28))"><svg width="52" height="48" viewBox="-3 -3 52 48" style="position:absolute;left:-3px;top:-3px">
<rect x="0.6" y="1.4" width="44.8" height="39.2" rx="5.4" fill="#5a1a66" fill-opacity="0.14"/>
<rect x="0" y="0.5" width="46" height="39.6" rx="5.2" fill="#a535ad" fill-opacity="0.5"/>
<rect x="0" y="0" width="46" height="39.6" rx="5" fill="url(#gimg)"/>
<path d="M23,0 H41 a5,5 0 0 1 5,5 V34.6 a5,5 0 0 1 -5,5 H23 Z" fill="#fff" fill-opacity="0.11"/>
<path d="M0,19.8 H46 V34.6 a5,5 0 0 1 -5,5 H5 a5,5 0 0 1 -5,-5 Z" fill="#fff" fill-opacity="0.11"/>
<path d="M10.8,30.8 L18.8,15.6 L22.4,22.6 L24.5,19.6 L30.2,30.8 Z" fill="#f0d4f1" fill-opacity="0.86"/>
<circle cx="31" cy="14" r="4" fill="#f0d4f1" fill-opacity="0.86"/>
</svg></div>
<div class="lab" style="left:530px;top:249.9px">Rufus.png</div>
<div style="position:absolute;left:680px;top:201px;width:46px;height:40px;filter:drop-shadow(0 1px 1.2px rgba(60,20,70,0.28))"><svg width="52" height="48" viewBox="-3 -3 52 48" style="position:absolute;left:-3px;top:-3px">
<rect x="0.6" y="1.4" width="44.8" height="39.2" rx="5.4" fill="#5a1a66" fill-opacity="0.14"/>
<rect x="0" y="0.5" width="46" height="39.6" rx="5.2" fill="#a535ad" fill-opacity="0.5"/>
<rect x="0" y="0" width="46" height="39.6" rx="5" fill="url(#gimg)"/>
<path d="M23,0 H41 a5,5 0 0 1 5,5 V34.6 a5,5 0 0 1 -5,5 H23 Z" fill="#fff" fill-opacity="0.11"/>
<path d="M0,19.8 H46 V34.6 a5,5 0 0 1 -5,5 H5 a5,5 0 0 1 -5,-5 Z" fill="#fff" fill-opacity="0.11"/>
<path d="M10.8,30.8 L18.8,15.6 L22.4,22.6 L24.5,19.6 L30.2,30.8 Z" fill="#f0d4f1" fill-opacity="0.86"/>
<circle cx="31" cy="14" r="4" fill="#f0d4f1" fill-opacity="0.86"/>
</svg></div>
<div class="lab" style="left:643px;top:249.9px">Screendreh.<br>png</div>
<div style="position:absolute;left:793px;top:201px;width:46px;height:40px;filter:drop-shadow(0 1px 1.2px rgba(60,20,70,0.28))"><svg width="52" height="48" viewBox="-3 -3 52 48" style="position:absolute;left:-3px;top:-3px">
<rect x="0.6" y="1.4" width="44.8" height="39.2" rx="5.4" fill="#5a1a66" fill-opacity="0.14"/>
<rect x="0" y="0.5" width="46" height="39.6" rx="5.2" fill="#a535ad" fill-opacity="0.5"/>
<rect x="0" y="0" width="46" height="39.6" rx="5" fill="url(#gimg)"/>
<path d="M23,0 H41 a5,5 0 0 1 5,5 V34.6 a5,5 0 0 1 -5,5 H23 Z" fill="#fff" fill-opacity="0.11"/>
<path d="M0,19.8 H46 V34.6 a5,5 0 0 1 -5,5 H5 a5,5 0 0 1 -5,-5 Z" fill="#fff" fill-opacity="0.11"/>
<path d="M10.8,30.8 L18.8,15.6 L22.4,22.6 L24.5,19.6 L30.2,30.8 Z" fill="#f0d4f1" fill-opacity="0.86"/>
<circle cx="31" cy="14" r="4" fill="#f0d4f1" fill-opacity="0.86"/>
</svg></div>
<div class="lab" style="left:756px;top:249.9px">Seagate<br>abklemmen.<br>png</div>
<div style="position:absolute;left:228px;top:327px;width:46px;height:40px;filter:drop-shadow(0 1px 1.2px rgba(60,20,70,0.28))"><svg width="52" height="48" viewBox="-3 -3 52 48" style="position:absolute;left:-3px;top:-3px">
<rect x="0.6" y="1.4" width="44.8" height="39.2" rx="5.4" fill="#5a1a66" fill-opacity="0.14"/>
<rect x="0" y="0.5" width="46" height="39.6" rx="5.2" fill="#a535ad" fill-opacity="0.5"/>
<rect x="0" y="0" width="46" height="39.6" rx="5" fill="url(#gimg)"/>
<path d="M23,0 H41 a5,5 0 0 1 5,5 V34.6 a5,5 0 0 1 -5,5 H23 Z" fill="#fff" fill-opacity="0.11"/>
<path d="M0,19.8 H46 V34.6 a5,5 0 0 1 -5,5 H5 a5,5 0 0 1 -5,-5 Z" fill="#fff" fill-opacity="0.11"/>
<path d="M10.8,30.8 L18.8,15.6 L22.4,22.6 L24.5,19.6 L30.2,30.8 Z" fill="#f0d4f1" fill-opacity="0.86"/>
<circle cx="31" cy="14" r="4" fill="#f0d4f1" fill-opacity="0.86"/>
</svg></div>
<div class="lab" style="left:191px;top:375.9px">Signatur<br>B250M.png</div>
<div style="position:absolute;left:341px;top:327px;width:46px;height:40px;filter:drop-shadow(0 1px 1.2px rgba(60,20,70,0.28))"><svg width="52" height="48" viewBox="-3 -3 52 48" style="position:absolute;left:-3px;top:-3px">
<rect x="0.6" y="1.4" width="44.8" height="39.2" rx="5.4" fill="#5a1a66" fill-opacity="0.14"/>
<rect x="0" y="0.5" width="46" height="39.6" rx="5.2" fill="#a535ad" fill-opacity="0.5"/>
<rect x="0" y="0" width="46" height="39.6" rx="5" fill="url(#gimg)"/>
<path d="M23,0 H41 a5,5 0 0 1 5,5 V34.6 a5,5 0 0 1 -5,5 H23 Z" fill="#fff" fill-opacity="0.11"/>
<path d="M0,19.8 H46 V34.6 a5,5 0 0 1 -5,5 H5 a5,5 0 0 1 -5,-5 Z" fill="#fff" fill-opacity="0.11"/>
<path d="M10.8,30.8 L18.8,15.6 L22.4,22.6 L24.5,19.6 L30.2,30.8 Z" fill="#f0d4f1" fill-opacity="0.86"/>
<circle cx="31" cy="14" r="4" fill="#f0d4f1" fill-opacity="0.86"/>
</svg></div>
<div class="lab" style="left:304px;top:375.9px">Suche<br>Bug.png</div>
<div style="position:absolute;left:454px;top:327px;width:46px;height:40px;filter:drop-shadow(0 1px 1.2px rgba(60,20,70,0.28))"><svg width="52" height="48" viewBox="-3 -3 52 48" style="position:absolute;left:-3px;top:-3px">
<rect x="0.6" y="1.4" width="44.8" height="39.2" rx="5.4" fill="#5a1a66" fill-opacity="0.14"/>
<rect x="0" y="0.5" width="46" height="39.6" rx="5.2" fill="#a535ad" fill-opacity="0.5"/>
<rect x="0" y="0" width="46" height="39.6" rx="5" fill="url(#gimg)"/>
<path d="M23,0 H41 a5,5 0 0 1 5,5 V34.6 a5,5 0 0 1 -5,5 H23 Z" fill="#fff" fill-opacity="0.11"/>
<path d="M0,19.8 H46 V34.6 a5,5 0 0 1 -5,5 H5 a5,5 0 0 1 -5,-5 Z" fill="#fff" fill-opacity="0.11"/>
<path d="M10.8,30.8 L18.8,15.6 L22.4,22.6 L24.5,19.6 L30.2,30.8 Z" fill="#f0d4f1" fill-opacity="0.86"/>
<circle cx="31" cy="14" r="4" fill="#f0d4f1" fill-opacity="0.86"/>
</svg></div>
<div class="lab" style="left:417px;top:375.9px">Suche<br>erweitert.pn<br>g</div>
<div style="position:absolute;left:567px;top:327px;width:46px;height:40px;filter:drop-shadow(0 1px 1.2px rgba(60,20,70,0.28))"><svg width="52" height="48" viewBox="-3 -3 52 48" style="position:absolute;left:-3px;top:-3px">
<rect x="0.6" y="1.4" width="44.8" height="39.2" rx="5.4" fill="#5a1a66" fill-opacity="0.14"/>
<rect x="0" y="0.5" width="46" height="39.6" rx="5.2" fill="#a535ad" fill-opacity="0.5"/>
<rect x="0" y="0" width="46" height="39.6" rx="5" fill="url(#gimg)"/>
<path d="M23,0 H41 a5,5 0 0 1 5,5 V34.6 a5,5 0 0 1 -5,5 H23 Z" fill="#fff" fill-opacity="0.11"/>
<path d="M0,19.8 H46 V34.6 a5,5 0 0 1 -5,5 H5 a5,5 0 0 1 -5,-5 Z" fill="#fff" fill-opacity="0.11"/>
<path d="M10.8,30.8 L18.8,15.6 L22.4,22.6 L24.5,19.6 L30.2,30.8 Z" fill="#f0d4f1" fill-opacity="0.86"/>
<circle cx="31" cy="14" r="4" fill="#f0d4f1" fill-opacity="0.86"/>
</svg></div>
<div class="lab" style="left:530px;top:375.9px">W11 Clean<br>200mb.png</div>
<div style="position:absolute;left:680px;top:327px;width:46px;height:40px;filter:drop-shadow(0 1px 1.2px rgba(60,20,70,0.28))"><svg width="52" height="48" viewBox="-3 -3 52 48" style="position:absolute;left:-3px;top:-3px">
<rect x="0.6" y="1.4" width="44.8" height="39.2" rx="5.4" fill="#5a1a66" fill-opacity="0.14"/>
<rect x="0" y="0.5" width="46" height="39.6" rx="5.2" fill="#a535ad" fill-opacity="0.5"/>
<rect x="0" y="0" width="46" height="39.6" rx="5" fill="url(#gimg)"/>
<path d="M23,0 H41 a5,5 0 0 1 5,5 V34.6 a5,5 0 0 1 -5,5 H23 Z" fill="#fff" fill-opacity="0.11"/>
<path d="M0,19.8 H46 V34.6 a5,5 0 0 1 -5,5 H5 a5,5 0 0 1 -5,-5 Z" fill="#fff" fill-opacity="0.11"/>
<path d="M10.8,30.8 L18.8,15.6 L22.4,22.6 L24.5,19.6 L30.2,30.8 Z" fill="#f0d4f1" fill-opacity="0.86"/>
<circle cx="31" cy="14" r="4" fill="#f0d4f1" fill-opacity="0.86"/>
</svg></div>
<div class="lab" style="left:643px;top:375.9px">Win 10<br>key.png</div>
<div style="position:absolute;left:793px;top:327px;width:46px;height:40px;filter:drop-shadow(0 1px 1.2px rgba(60,20,70,0.28))"><svg width="52" height="48" viewBox="-3 -3 52 48" style="position:absolute;left:-3px;top:-3px">
<rect x="0.6" y="1.4" width="44.8" height="39.2" rx="5.4" fill="#5a1a66" fill-opacity="0.14"/>
<rect x="0" y="0.5" width="46" height="39.6" rx="5.2" fill="#a535ad" fill-opacity="0.5"/>
<rect x="0" y="0" width="46" height="39.6" rx="5" fill="url(#gimg)"/>
<path d="M23,0 H41 a5,5 0 0 1 5,5 V34.6 a5,5 0 0 1 -5,5 H23 Z" fill="#fff" fill-opacity="0.11"/>
<path d="M0,19.8 H46 V34.6 a5,5 0 0 1 -5,5 H5 a5,5 0 0 1 -5,-5 Z" fill="#fff" fill-opacity="0.11"/>
<path d="M10.8,30.8 L18.8,15.6 L22.4,22.6 L24.5,19.6 L30.2,30.8 Z" fill="#f0d4f1" fill-opacity="0.86"/>
<circle cx="31" cy="14" r="4" fill="#f0d4f1" fill-opacity="0.86"/>
</svg></div>
<div class="lab" style="left:756px;top:375.9px">Winver<br>26100<br>4770.png</div>
<div style="position:absolute;left:228px;top:453px;width:46px;height:40px;filter:drop-shadow(0 1px 1.2px rgba(60,20,70,0.28))"><svg width="52" height="48" viewBox="-3 -3 52 48" style="position:absolute;left:-3px;top:-3px">
<rect x="0.6" y="1.4" width="44.8" height="39.2" rx="5.4" fill="#5a1a66" fill-opacity="0.14"/>
<rect x="0" y="0.5" width="46" height="39.6" rx="5.2" fill="#a535ad" fill-opacity="0.5"/>
<rect x="0" y="0" width="46" height="39.6" rx="5" fill="url(#gimg)"/>
<path d="M23,0 H41 a5,5 0 0 1 5,5 V34.6 a5,5 0 0 1 -5,5 H23 Z" fill="#fff" fill-opacity="0.11"/>
<path d="M0,19.8 H46 V34.6 a5,5 0 0 1 -5,5 H5 a5,5 0 0 1 -5,-5 Z" fill="#fff" fill-opacity="0.11"/>
<path d="M10.8,30.8 L18.8,15.6 L22.4,22.6 L24.5,19.6 L30.2,30.8 Z" fill="#f0d4f1" fill-opacity="0.86"/>
<circle cx="31" cy="14" r="4" fill="#f0d4f1" fill-opacity="0.86"/>
</svg></div>
<div class="lab" style="left:191px;top:501.9px">alle Indiz<br>Ordner.png</div>
<div style="position:absolute;left:341px;top:453px;width:46px;height:40px;filter:drop-shadow(0 1px 1.2px rgba(60,20,70,0.28))"><svg width="52" height="48" viewBox="-3 -3 52 48" style="position:absolute;left:-3px;top:-3px">
<rect x="0.6" y="1.4" width="44.8" height="39.2" rx="5.4" fill="#5a1a66" fill-opacity="0.14"/>
<rect x="0" y="0.5" width="46" height="39.6" rx="5.2" fill="#a535ad" fill-opacity="0.5"/>
<rect x="0" y="0" width="46" height="39.6" rx="5" fill="url(#gimg)"/>
<path d="M23,0 H41 a5,5 0 0 1 5,5 V34.6 a5,5 0 0 1 -5,5 H23 Z" fill="#fff" fill-opacity="0.11"/>
<path d="M0,19.8 H46 V34.6 a5,5 0 0 1 -5,5 H5 a5,5 0 0 1 -5,-5 Z" fill="#fff" fill-opacity="0.11"/>
<path d="M10.8,30.8 L18.8,15.6 L22.4,22.6 L24.5,19.6 L30.2,30.8 Z" fill="#f0d4f1" fill-opacity="0.86"/>
<circle cx="31" cy="14" r="4" fill="#f0d4f1" fill-opacity="0.86"/>
</svg></div>
<div class="lab" style="left:304px;top:501.9px">ext SSD .png</div>
</div>
<div class="win" style="left:272px;top:371px;width:890px;height:858px;box-shadow:0 0 0 1px rgba(0,0,0,0.09), 0 2px 8px 2px rgba(0,0,0,0.17), 0 3px 20px 10px rgba(0,0,0,0.11), 0 6px 32px 16px rgba(0,0,0,0.05);z-index:20">
<div style="position:absolute;left:0;top:0;width:179px;height:858px;background:#ebebeb;border-right:1px solid #d4d4d4;box-shadow:inset 1px 1px 0 rgba(255,255,255,0.6)"></div>
<svg width="890" height="46" viewBox="0 0 890 46" style="position:absolute;left:0;top:0">
<circle cx="21.9" cy="21.9" r="5.7" fill="none" stroke="#2e2e2e" stroke-width="1.15" stroke-linecap="round" stroke-linejoin="round"/><path d="M26,26.2 L29.4,29.6" fill="none" stroke="#2e2e2e" stroke-width="1.15" stroke-linecap="round" stroke-linejoin="round" stroke-width="1.5"/>
<path d="M152.2,18.2 H162 M152.2,22.4 H162 M152.2,26.6 H162" fill="none" stroke="#2e2e2e" stroke-width="1.15" stroke-linecap="round" stroke-linejoin="round" stroke-width="1.05"/>
<path d="M205,15.8 L200.2,23.2 L205,30.6" fill="none" stroke="#2e2e2e" stroke-width="1.15" stroke-linecap="round" stroke-linejoin="round" stroke-width="1.1"/>
<path d="M241.4,15.8 L246.2,23.2 L241.4,30.6" fill="none" stroke="#c6c6c6" stroke-width="1.1" stroke-linecap="round" stroke-linejoin="round"/>
<rect x="284" y="6" width="365" height="34" rx="6.5" fill="#ebebeb"/>
<g fill="none" stroke="#8c8c8c" stroke-width="1">
<rect x="298.5" y="15.7" width="12" height="14.6" rx="2"/>
<rect x="301.6" y="19" width="5.8" height="8" rx="0.8"/>
<path d="M300.4,20.5 h1.2 M300.4,22.3 h1.2 M300.4,24.1 h1.2 M300.4,25.9 h1.2 M307.4,20.5 h1.2 M307.4,22.3 h1.2 M307.4,24.1 h1.2 M307.4,25.9 h1.2 M303,17.8 v1.2 M304.5,17.8 v1.2 M306,17.8 v1.2 M303,27 v1.2 M304.5,27 v1.2 M306,27 v1.2" stroke-width="0.8"/>
</g>
<path d="M393.3,16.8 L388.2,30.6" fill="none" stroke="#8c8c8c" stroke-width="1.1"/>
<g fill="#2e2e2e"><rect x="630" y="17.9" width="2.1" height="2.1"/><rect x="630" y="22" width="2.1" height="2.1"/><rect x="630" y="26" width="2.1" height="2.1"/></g>
<path d="M670,29.4 H666 a1.8,1.8 0 0 1 -1.8,-1.8 V18.4 a1.8,1.8 0 0 1 1.8,-1.8 H669.4 l1.8,2.2 H677.6 a1.8,1.8 0 0 1 1.8,1.8 V22.6" fill="none" stroke="#2e2e2e" stroke-width="1.15" stroke-linecap="round" stroke-linejoin="round" stroke-width="1.05"/>
<circle cx="674.2" cy="25.4" r="3.7" fill="none" stroke="#2e2e2e" stroke-width="1.15" stroke-linecap="round" stroke-linejoin="round" stroke-width="1.05"/><path d="M677,28.2 L679.4,30.4" fill="none" stroke="#2e2e2e" stroke-width="1.15" stroke-linecap="round" stroke-linejoin="round" stroke-width="1.05"/>
<g fill="none" stroke="#2e2e2e" stroke-width="1.15" stroke-linecap="round" stroke-linejoin="round" stroke-width="1.0"><rect x="724.4" y="17.2" width="2.2" height="2.2"/><rect x="724.4" y="21.4" width="2.2" height="2.2"/><rect x="724.4" y="25.5" width="2.2" height="2.2"/><path d="M729.6,18.3 H736 M729.6,22.5 H736 M729.6,26.6 H736"/></g>
<rect x="746" y="12" width="1" height="21.6" fill="#cfcfcf"/>
<path d="M753.2,21.4 L758,25.8 L762.8,21.4" fill="none" stroke="#2e2e2e" stroke-width="1.15" stroke-linecap="round" stroke-linejoin="round" stroke-width="1.1"/>
<circle cx="792.9" cy="23" r="12" fill="#ebebeb"/><circle cx="830" cy="23" r="12" fill="#ebebeb"/><circle cx="866.9" cy="23" r="12" fill="#ebebeb"/>
<path d="M789,25.6 H797" fill="none" stroke="#2e2e2e" stroke-width="1.15" stroke-linecap="round" stroke-linejoin="round" stroke-width="1.1"/>
<rect x="826.2" y="19.2" width="7.6" height="7.6" fill="none" stroke="#2e2e2e" stroke-width="1.15" stroke-linecap="round" stroke-linejoin="round" stroke-width="1.1" stroke-linejoin="miter"/>
<path d="M863.3,19.4 L870.5,26.6 M870.5,19.4 L863.3,26.6" fill="none" stroke="#2e2e2e" stroke-width="1.15" stroke-linecap="round" stroke-linejoin="round" stroke-width="1.15"/>
</svg>
<div style="position:absolute;top:13.75px;line-height:18px;font-size:14px;font-weight:700;color:#2e2e2e;white-space:pre;left:-110.40px;width:400px;text-align:center;">Files</div>
<div style="position:absolute;top:13.95px;line-height:18px;font-size:14px;font-weight:700;color:#8c8c8c;white-space:pre;letter-spacing:0.15px;left:319.50px;">D Daten</div>
<div style="position:absolute;top:13.95px;line-height:18px;font-size:14px;font-weight:700;color:#2e2e2e;white-space:pre;left:406.60px;">Screenshot</div>
<div style="position:absolute;left:20px;top:62px;width:16px;height:16px"><svg width="16" height="16" viewBox="0 0 16 16" style="position:absolute;left:0;top:0;overflow:visible"><path d="M2.3,8.9 A5.8,5.8 0 1 0 3.4,4.6" fill="none" stroke="#666666" stroke-width="1" stroke-linecap="round" stroke-linejoin="round"/><path d="M1.3,2.8 L1.6,5.7 L4.5,5.6" fill="none" stroke="#666666" stroke-width="1" stroke-linecap="round" stroke-linejoin="round"/><path d="M8.5,5 V8.7 L10.5,10.3" fill="none" stroke="#666666" stroke-width="1" stroke-linecap="round" stroke-linejoin="round"/></svg></div>
<div style="position:absolute;top:60.72px;line-height:18px;font-size:14.67px;font-weight:400;color:#3d3d3d;white-space:pre;left:43.60px;">Recent</div>
<div style="position:absolute;left:20px;top:100px;width:16px;height:16px"><svg width="16" height="16" viewBox="0 0 16 16" style="position:absolute;left:0;top:0;overflow:visible"><path d="M8,1.5 L9.9,6.1 L14.8,6.4 L11,9.6 L12.2,14.4 L8,11.8 L3.8,14.4 L5,9.6 L1.2,6.4 L6.1,6.1 Z" fill="#666666"/></svg></div>
<div style="position:absolute;top:98.72px;line-height:18px;font-size:14.67px;font-weight:400;color:#3d3d3d;white-space:pre;left:43.60px;">Starred</div>
<div style="position:absolute;left:20px;top:138px;width:16px;height:16px"><svg width="16" height="16" viewBox="0 0 16 16" style="position:absolute;left:0;top:0;overflow:visible"><path d="M1,8.6 L8,1.9 L15,8.6" fill="none" stroke="#666666" stroke-width="1" stroke-linecap="round" stroke-linejoin="round"/><path d="M3.5,7 V14.5 H12.5 V7" fill="none" stroke="#666666" stroke-width="1" stroke-linecap="round" stroke-linejoin="round"/><rect x="8" y="9.5" width="3" height="5" fill="#666666"/><path d="M11.5,2.8 H12.5 V5" fill="none" stroke="#666666" stroke-width="1" stroke-linecap="round" stroke-linejoin="round"/></svg></div>
<div style="position:absolute;top:136.72px;line-height:18px;font-size:14.67px;font-weight:400;color:#3d3d3d;white-space:pre;left:43.60px;">Home</div>
<div style="position:absolute;left:20px;top:176px;width:16px;height:16px"><svg width="16" height="16" viewBox="0 0 16 16" style="position:absolute;left:0;top:0;overflow:visible"><rect x="0.5" y="2.5" width="15" height="12" rx="1.8" fill="none" stroke="#666666" stroke-width="1" stroke-linecap="round" stroke-linejoin="round"/><path d="M0.5,4.3 a1.8,1.8 0 0 1 1.8,-1.8 H4 V14.5 H2.3 a1.8,1.8 0 0 1 -1.8,-1.8 Z" fill="#666666"/></svg></div>
<div style="position:absolute;top:174.72px;line-height:18px;font-size:14.67px;font-weight:400;color:#3d3d3d;white-space:pre;left:43.60px;">Desktop</div>
<div style="position:absolute;left:20px;top:214px;width:16px;height:16px"><svg width="16" height="16" viewBox="0 0 16 16" style="position:absolute;left:0;top:0;overflow:visible"><path d="M3.3,0.5 H9.5 L14.5,5.5 V13.9 a1.6,1.6 0 0 1 -1.6,1.6 H3.3 a1.6,1.6 0 0 1 -1.6,-1.6 V2.1 a1.6,1.6 0 0 1 1.6,-1.6 Z" fill="none" stroke="#666666" stroke-width="1" stroke-linecap="round" stroke-linejoin="round"/><path d="M9.5,0.8 V5.5 H14.2" fill="none" stroke="#666666" stroke-width="1" stroke-linecap="round" stroke-linejoin="round"/><path d="M4.5,7.5 H11.5 M4.5,9.5 H11.5 M4.5,11.5 H11.5 M4.5,13.3 H8" fill="none" stroke="#666666" stroke-width="1" stroke-linecap="round" stroke-linejoin="round" stroke-width="0.9"/></svg></div>
<div style="position:absolute;top:212.72px;line-height:18px;font-size:14.67px;font-weight:400;color:#3d3d3d;white-space:pre;left:43.60px;">Documents</div>
<div style="position:absolute;left:20px;top:252px;width:16px;height:16px"><svg width="16" height="16" viewBox="0 0 16 16" style="position:absolute;left:0;top:0;overflow:visible"><path d="M5.5,0.5 H10.5 V7 H13 L8,12.6 L3,7 H5.5 Z" fill="none" stroke="#666666" stroke-width="1" stroke-linecap="round" stroke-linejoin="round"/><path d="M3.5,15.5 H12.5" fill="none" stroke="#666666" stroke-width="1" stroke-linecap="round" stroke-linejoin="round"/></svg></div>
<div style="position:absolute;top:250.72px;line-height:18px;font-size:14.67px;font-weight:400;color:#3d3d3d;white-space:pre;left:43.60px;">Downloads</div>
<div style="position:absolute;left:20px;top:290px;width:16px;height:16px"><svg width="16" height="16" viewBox="0 0 16 16" style="position:absolute;left:0;top:0;overflow:visible"><path d="M5,12.6 V3 L13.6,1.2 V11" fill="none" stroke="#666666" stroke-width="1" stroke-linecap="round" stroke-linejoin="round" stroke-width="1.2"/><path d="M5,3 L13.6,1.2 V3.4 L5,5.2 Z" fill="#666666"/><ellipse cx="3.2" cy="12.8" rx="2.1" ry="1.7" fill="#666666"/><ellipse cx="11.8" cy="11.3" rx="2.1" ry="1.7" fill="#666666"/></svg></div>
<div style="position:absolute;top:288.72px;line-height:18px;font-size:14.67px;font-weight:400;color:#3d3d3d;white-space:pre;left:43.60px;">Music</div>
<div style="position:absolute;left:20px;top:328px;width:16px;height:16px"><svg width="16" height="16" viewBox="0 0 16 16" style="position:absolute;left:0;top:0;overflow:visible"><rect x="0.5" y="1.5" width="15" height="13" rx="1.8" fill="none" stroke="#666666" stroke-width="1" stroke-linecap="round" stroke-linejoin="round"/><path d="M0.5,11.5 H15.5 V12.7 a1.8,1.8 0 0 1 -1.8,1.8 H2.3 a1.8,1.8 0 0 1 -1.8,-1.8 Z" fill="#666666"/><path d="M3.4,10.4 L6.4,6.2 L8.4,8.8 L9.6,7.6 L11.8,10.4 Z" fill="#666666"/><circle cx="11.6" cy="4.9" r="1.1" fill="#666666"/></svg></div>
<div style="position:absolute;top:326.72px;line-height:18px;font-size:14.67px;font-weight:400;color:#3d3d3d;white-space:pre;left:43.60px;">Pictures</div>
<div style="position:absolute;left:20px;top:366px;width:16px;height:16px"><svg width="16" height="16" viewBox="0 0 16 16" style="position:absolute;left:0;top:0;overflow:visible"><rect x="1.5" y="1.5" width="13" height="13" fill="none" stroke="#666666" stroke-width="1" stroke-linecap="round" stroke-linejoin="round"/><path d="M4.5,1.5 V14.5 M11.5,1.5 V14.5 M4.5,8 H11.5" fill="none" stroke="#666666" stroke-width="1" stroke-linecap="round" stroke-linejoin="round"/><path d="M1.5,4.1 H4.5 M1.5,6.7 H4.5 M1.5,9.3 H4.5 M1.5,11.9 H4.5 M11.5,4.1 H14.5 M11.5,6.7 H14.5 M11.5,9.3 H14.5 M11.5,11.9 H14.5" fill="none" stroke="#666666" stroke-width="1" stroke-linecap="round" stroke-linejoin="round" stroke-width="0.9"/></svg></div>
<div style="position:absolute;top:364.72px;line-height:18px;font-size:14.67px;font-weight:400;color:#3d3d3d;white-space:pre;left:43.60px;">Videos</div>
<div style="position:absolute;left:20px;top:404px;width:16px;height:16px"><svg width="16" height="16" viewBox="0 0 16 16" style="position:absolute;left:0;top:0;overflow:visible"><path d="M3.5,4.5 V14 a1.5,1.5 0 0 0 1.5,1.5 H11 a1.5,1.5 0 0 0 1.5,-1.5 V4.5" fill="none" stroke="#666666" stroke-width="1" stroke-linecap="round" stroke-linejoin="round"/><path d="M2,4 H14" fill="none" stroke="#666666" stroke-width="1" stroke-linecap="round" stroke-linejoin="round" stroke-width="1.4"/><path d="M5.5,3.5 V1.5 a1,1 0 0 1 1,-1 H9.5 a1,1 0 0 1 1,1 V3.5" fill="none" stroke="#666666" stroke-width="1" stroke-linecap="round" stroke-linejoin="round"/><path d="M6,6.5 V12.5 M8,6.5 V12.5 M10,6.5 V12.5" fill="none" stroke="#666666" stroke-width="1" stroke-linecap="round" stroke-linejoin="round"/></svg></div>
<div style="position:absolute;top:402.72px;line-height:18px;font-size:14.67px;font-weight:400;color:#3d3d3d;white-space:pre;left:43.60px;">Trash</div>
<div style="position:absolute;left:20px;top:455px;width:16px;height:16px"><svg width="16" height="16" viewBox="0 0 16 16" style="position:absolute;left:0;top:0;overflow:visible"><rect x="0.5" y="1.5" width="15" height="13" rx="2.2" fill="none" stroke="#666666" stroke-width="1" stroke-linecap="round" stroke-linejoin="round"/><path d="M0.5,10.5 H15.5" fill="none" stroke="#666666" stroke-width="1" stroke-linecap="round" stroke-linejoin="round"/><path d="M3,12.5 H13" fill="none" stroke="#666666" stroke-width="1" stroke-linecap="round" stroke-linejoin="round" stroke-width="0.9"/></svg></div>
<div style="position:absolute;top:453.62px;line-height:18px;font-size:14.67px;font-weight:400;color:#3d3d3d;white-space:pre;left:44.40px;">549 MB Volume</div>
<div style="position:absolute;left:20px;top:493px;width:16px;height:16px"><svg width="16" height="16" viewBox="0 0 16 16" style="position:absolute;left:0;top:0;overflow:visible"><rect x="0.5" y="1.5" width="15" height="13" rx="2.2" fill="none" stroke="#666666" stroke-width="1" stroke-linecap="round" stroke-linejoin="round"/><path d="M0.5,10.5 H15.5" fill="none" stroke="#666666" stroke-width="1" stroke-linecap="round" stroke-linejoin="round"/><path d="M3,12.5 H13" fill="none" stroke="#666666" stroke-width="1" stroke-linecap="round" stroke-linejoin="round" stroke-width="0.9"/></svg></div>
<div style="position:absolute;top:491.62px;line-height:18px;font-size:14.67px;font-weight:400;color:#3d3d3d;white-space:pre;left:44.40px;">971 MB Volume</div>
<div style="position:absolute;left:20px;top:544px;width:16px;height:16px"><svg width="16" height="16" viewBox="0 0 16 16" style="position:absolute;left:0;top:0;overflow:visible"><path d="M7.5,2 V13 M2,7.5 H13" fill="none" stroke="#666666" stroke-width="1" stroke-linecap="round" stroke-linejoin="round" stroke-linecap="butt"/></svg></div>
<div style="position:absolute;top:542.42px;line-height:18px;font-size:14.67px;font-weight:400;color:#3d3d3d;white-space:pre;left:44.40px;">Other Locations</div>
<div style="position:absolute;left:6px;top:438px;width:168px;height:1px;background:#d4d4d4"></div>
<div style="position:absolute;left:6px;top:527px;width:168px;height:1px;background:#d4d4d4"></div>
<div style="position:absolute;left:228px;top:75px;width:46px;height:40px;filter:drop-shadow(0 1px 1.2px rgba(60,20,70,0.28))"><svg width="52" height="48" viewBox="-3 -3 52 48" style="position:absolute;left:-3px;top:-3px">
<rect x="0.6" y="1.4" width="44.8" height="39.2" rx="5.4" fill="#5a1a66" fill-opacity="0.14"/>
<rect x="0" y="0.5" width="46" height="39.6" rx="5.2" fill="#a535ad" fill-opacity="0.5"/>
<rect x="0" y="0" width="46" height="39.6" rx="5" fill="url(#gimg)"/>
<path d="M23,0 H41 a5,5 0 0 1 5,5 V34.6 a5,5 0 0 1 -5,5 H23 Z" fill="#fff" fill-opacity="0.11"/>
<path d="M0,19.8 H46 V34.6 a5,5 0 0 1 -5,5 H5 a5,5 0 0 1 -5,-5 Z" fill="#fff" fill-opacity="0.11"/>
<path d="M10.8,30.8 L18.8,15.6 L22.4,22.6 L24.5,19.6 L30.2,30.8 Z" fill="#f0d4f1" fill-opacity="0.86"/>
<circle cx="31" cy="14" r="4" fill="#f0d4f1" fill-opacity="0.86"/>
</svg></div>
<div class="lab" style="left:191px;top:123.9px">CTN25<br>Tools.png</div>
<div style="position:absolute;left:341px;top:75px;width:46px;height:40px;filter:drop-shadow(0 1px 1.2px rgba(60,20,70,0.28))"><svg width="52" height="48" viewBox="-3 -3 52 48" style="position:absolute;left:-3px;top:-3px">
<rect x="0.6" y="1.4" width="44.8" height="39.2" rx="5.4" fill="#5a1a66" fill-opacity="0.14"/>
<rect x="0" y="0.5" width="46" height="39.6" rx="5.2" fill="#a535ad" fill-opacity="0.5"/>
<rect x="0" y="0" width="46" height="39.6" rx="5" fill="url(#gimg)"/>
<path d="M23,0 H41 a5,5 0 0 1 5,5 V34.6 a5,5 0 0 1 -5,5 H23 Z" fill="#fff" fill-opacity="0.11"/>
<path d="M0,19.8 H46 V34.6 a5,5 0 0 1 -5,5 H5 a5,5 0 0 1 -5,-5 Z" fill="#fff" fill-opacity="0.11"/>
<path d="M10.8,30.8 L18.8,15.6 L22.4,22.6 L24.5,19.6 L30.2,30.8 Z" fill="#f0d4f1" fill-opacity="0.86"/>
<circle cx="31" cy="14" r="4" fill="#f0d4f1" fill-opacity="0.86"/>
</svg></div>
<div class="lab" style="left:304px;top:123.9px">Erwartunge<br>n.png</div>
<div style="position:absolute;left:454px;top:75px;width:46px;height:40px;filter:drop-shadow(0 1px 1.2px rgba(60,20,70,0.28))"><svg width="52" height="48" viewBox="-3 -3 52 48" style="position:absolute;left:-3px;top:-3px">
<rect x="0.6" y="1.4" width="44.8" height="39.2" rx="5.4" fill="#5a1a66" fill-opacity="0.14"/>
<rect x="0" y="0.5" width="46" height="39.6" rx="5.2" fill="#a535ad" fill-opacity="0.5"/>
<rect x="0" y="0" width="46" height="39.6" rx="5" fill="url(#gimg)"/>
<path d="M23,0 H41 a5,5 0 0 1 5,5 V34.6 a5,5 0 0 1 -5,5 H23 Z" fill="#fff" fill-opacity="0.11"/>
<path d="M0,19.8 H46 V34.6 a5,5 0 0 1 -5,5 H5 a5,5 0 0 1 -5,-5 Z" fill="#fff" fill-opacity="0.11"/>
<path d="M10.8,30.8 L18.8,15.6 L22.4,22.6 L24.5,19.6 L30.2,30.8 Z" fill="#f0d4f1" fill-opacity="0.86"/>
<circle cx="31" cy="14" r="4" fill="#f0d4f1" fill-opacity="0.86"/>
</svg></div>
<div class="lab" style="left:417px;top:123.9px">GUI<br>Interface<br>Date…n.png</div>
<div style="position:absolute;left:567px;top:75px;width:46px;height:40px;filter:drop-shadow(0 1px 1.2px rgba(60,20,70,0.28))"><svg width="52" height="48" viewBox="-3 -3 52 48" style="position:absolute;left:-3px;top:-3px">
<rect x="0.6" y="1.4" width="44.8" height="39.2" rx="5.4" fill="#5a1a66" fill-opacity="0.14"/>
<rect x="0" y="0.5" width="46" height="39.6" rx="5.2" fill="#a535ad" fill-opacity="0.5"/>
<rect x="0" y="0" width="46" height="39.6" rx="5" fill="url(#gimg)"/>
<path d="M23,0 H41 a5,5 0 0 1 5,5 V34.6 a5,5 0 0 1 -5,5 H23 Z" fill="#fff" fill-opacity="0.11"/>
<path d="M0,19.8 H46 V34.6 a5,5 0 0 1 -5,5 H5 a5,5 0 0 1 -5,-5 Z" fill="#fff" fill-opacity="0.11"/>
<path d="M10.8,30.8 L18.8,15.6 L22.4,22.6 L24.5,19.6 L30.2,30.8 Z" fill="#f0d4f1" fill-opacity="0.86"/>
<circle cx="31" cy="14" r="4" fill="#f0d4f1" fill-opacity="0.86"/>
</svg></div>
<div class="lab" style="left:530px;top:123.9px">Laufwerke.p<br>ng</div>
<div style="position:absolute;left:680px;top:75px;width:46px;height:40px;filter:drop-shadow(0 1px 1.2px rgba(60,20,70,0.28))"><svg width="52" height="48" viewBox="-3 -3 52 48" style="position:absolute;left:-3px;top:-3px">
<rect x="0.6" y="1.4" width="44.8" height="39.2" rx="5.4" fill="#5a1a66" fill-opacity="0.14"/>
<rect x="0" y="0.5" width="46" height="39.6" rx="5.2" fill="#a535ad" fill-opacity="0.5"/>
<rect x="0" y="0" width="46" height="39.6" rx="5" fill="url(#gimg)"/>
<path d="M23,0 H41 a5,5 0 0 1 5,5 V34.6 a5,5 0 0 1 -5,5 H23 Z" fill="#fff" fill-opacity="0.11"/>
<path d="M0,19.8 H46 V34.6 a5,5 0 0 1 -5,5 H5 a5,5 0 0 1 -5,-5 Z" fill="#fff" fill-opacity="0.11"/>
<path d="M10.8,30.8 L18.8,15.6 L22.4,22.6 L24.5,19.6 L30.2,30.8 Z" fill="#f0d4f1" fill-opacity="0.86"/>
<circle cx="31" cy="14" r="4" fill="#f0d4f1" fill-opacity="0.86"/>
</svg></div>
<div class="lab" style="left:643px;top:123.9px">Ordner.png</div>
<div style="position:absolute;left:793px;top:75px;width:46px;height:40px;filter:drop-shadow(0 1px 1.2px rgba(60,20,70,0.28))"><svg width="52" height="48" viewBox="-3 -3 52 48" style="position:absolute;left:-3px;top:-3px">
<rect x="0.6" y="1.4" width="44.8" height="39.2" rx="5.4" fill="#5a1a66" fill-opacity="0.14"/>
<rect x="0" y="0.5" width="46" height="39.6" rx="5.2" fill="#a535ad" fill-opacity="0.5"/>
<rect x="0" y="0" width="46" height="39.6" rx="5" fill="url(#gimg)"/>
<path d="M23,0 H41 a5,5 0 0 1 5,5 V34.6 a5,5 0 0 1 -5,5 H23 Z" fill="#fff" fill-opacity="0.11"/>
<path d="M0,19.8 H46 V34.6 a5,5 0 0 1 -5,5 H5 a5,5 0 0 1 -5,-5 Z" fill="#fff" fill-opacity="0.11"/>
<path d="M10.8,30.8 L18.8,15.6 L22.4,22.6 L24.5,19.6 L30.2,30.8 Z" fill="#f0d4f1" fill-opacity="0.86"/>
<circle cx="31" cy="14" r="4" fill="#f0d4f1" fill-opacity="0.86"/>
</svg></div>
<div class="lab" style="left:756px;top:123.9px">Ubuntu.png</div>
<div style="position:absolute;left:228px;top:201px;width:46px;height:40px;filter:drop-shadow(0 1px 1.2px rgba(60,20,70,0.28))"><svg width="52" height="48" viewBox="-3 -3 52 48" style="position:absolute;left:-3px;top:-3px">
<rect x="0.6" y="1.4" width="44.8" height="39.2" rx="5.4" fill="#5a1a66" fill-opacity="0.14"/>
<rect x="0" y="0.5" width="46" height="39.6" rx="5.2" fill="#a535ad" fill-opacity="0.5"/>
<rect x="0" y="0" width="46" height="39.6" rx="5" fill="url(#gimg)"/>
<path d="M23,0 H41 a5,5 0 0 1 5,5 V34.6 a5,5 0 0 1 -5,5 H23 Z" fill="#fff" fill-opacity="0.11"/>
<path d="M0,19.8 H46 V34.6 a5,5 0 0 1 -5,5 H5 a5,5 0 0 1 -5,-5 Z" fill="#fff" fill-opacity="0.11"/>
<path d="M10.8,30.8 L18.8,15.6 L22.4,22.6 L24.5,19.6 L30.2,30.8 Z" fill="#f0d4f1" fill-opacity="0.86"/>
<circle cx="31" cy="14" r="4" fill="#f0d4f1" fill-opacity="0.86"/>
</svg></div>
<div class="lab" style="left:191px;top:249.9px">Ubuntu<br>unknown.pn<br>g</div>
<div style="position:absolute;left:341px;top:201px;width:46px;height:40px;filter:drop-shadow(0 1px 1.2px rgba(60,20,70,0.28))"><svg width="52" height="48" viewBox="-3 -3 52 48" style="position:absolute;left:-3px;top:-3px">
<rect x="0.6" y="1.4" width="44.8" height="39.2" rx="5.4" fill="#5a1a66" fill-opacity="0.14"/>
<rect x="0" y="0.5" width="46" height="39.6" rx="5.2" fill="#a535ad" fill-opacity="0.5"/>
<rect x="0" y="0" width="46" height="39.6" rx="5" fill="url(#gimg)"/>
<path d="M23,0 H41 a5,5 0 0 1 5,5 V34.6 a5,5 0 0 1 -5,5 H23 Z" fill="#fff" fill-opacity="0.11"/>
<path d="M0,19.8 H46 V34.6 a5,5 0 0 1 -5,5 H5 a5,5 0 0 1 -5,-5 Z" fill="#fff" fill-opacity="0.11"/>
<path d="M10.8,30.8 L18.8,15.6 L22.4,22.6 L24.5,19.6 L30.2,30.8 Z" fill="#f0d4f1" fill-opacity="0.86"/>
<circle cx="31" cy="14" r="4" fill="#f0d4f1" fill-opacity="0.86"/>
</svg></div>
<div class="lab" style="left:304px;top:249.9px">W11 24h<br>Clean<br>Install.png</div>
<div style="position:absolute;left:454px;top:201px;width:46px;height:40px;filter:drop-shadow(0 1px 1.2px rgba(60,20,70,0.28))"><svg width="52" height="48" viewBox="-3 -3 52 48" style="position:absolute;left:-3px;top:-3px">
<rect x="0.6" y="1.4" width="44.8" height="39.2" rx="5.4" fill="#5a1a66" fill-opacity="0.14"/>
<rect x="0" y="0.5" width="46" height="39.6" rx="5.2" fill="#a535ad" fill-opacity="0.5"/>
<rect x="0" y="0" width="46" height="39.6" rx="5" fill="url(#gimg)"/>
<path d="M23,0 H41 a5,5 0 0 1 5,5 V34.6 a5,5 0 0 1 -5,5 H23 Z" fill="#fff" fill-opacity="0.11"/>
<path d="M0,19.8 H46 V34.6 a5,5 0 0 1 -5,5 H5 a5,5 0 0 1 -5,-5 Z" fill="#fff" fill-opacity="0.11"/>
<path d="M10.8,30.8 L18.8,15.6 L22.4,22.6 L24.5,19.6 L30.2,30.8 Z" fill="#f0d4f1" fill-opacity="0.86"/>
<circle cx="31" cy="14" r="4" fill="#f0d4f1" fill-opacity="0.86"/>
</svg></div>
<div class="lab" style="left:417px;top:249.9px">W11 Clean<br>200mb.png</div>
</div>
<div class="note" style="left:828px;top:979.1px;font-size:18.4px;letter-spacing:-0.35px">LEXAR NM790 SSD</div>
<div class="note" style="left:1481.4px;top:985.9px;font-size:18.4px;letter-spacing:-0.2px">Crucial CT1000 SSD</div>
<div id="dock"></div>
<div style="position:absolute;left:0;top:0;z-index:45"><svg id="docksvg" width="66" height="1440" viewBox="0 0 66 1440" style="position:absolute;left:0;top:0">
<defs>
<linearGradient id="gdisk" x1="0" y1="0" x2="0" y2="1"><stop offset="0" stop-color="#c6c6c6"/><stop offset="1" stop-color="#d9d9d9"/></linearGradient>
<linearGradient id="gssd" x1="0" y1="0" x2="0" y2="1"><stop offset="0" stop-color="#9f9f9f"/><stop offset="1" stop-color="#d2d2d2"/></linearGradient>
<linearGradient id="gflat" x1="0" y1="0" x2="0" y2="1"><stop offset="0" stop-color="#a4a4a4"/><stop offset="1" stop-color="#c4c4c4"/></linearGradient>
<linearGradient id="gtrash" x1="0" y1="0" x2="0" y2="1"><stop offset="0" stop-color="#b8b8b8"/><stop offset="1" stop-color="#d8d8d8"/></linearGradient>
<linearGradient id="gffbody" gradientUnits="userSpaceOnUse" x1="38" y1="110" x2="29" y2="154"><stop offset="0" stop-color="#fff44f"/><stop offset="0.25" stop-color="#ffb52a"/><stop offset="0.45" stop-color="#ff8a16"/><stop offset="0.68" stop-color="#ff4340"/><stop offset="0.88" stop-color="#f5156c"/><stop offset="1" stop-color="#e31587"/></linearGradient>
<linearGradient id="gffflame" gradientUnits="userSpaceOnUse" x1="42" y1="110" x2="40" y2="150"><stop offset="0" stop-color="#fff44f"/><stop offset="0.5" stop-color="#ffbd4f"/><stop offset="1" stop-color="#ff7139" stop-opacity="0.3"/></linearGradient>
<radialGradient id="gffglobe" gradientUnits="userSpaceOnUse" cx="32" cy="128" r="13"><stop offset="0" stop-color="#9059ff"/><stop offset="0.6" stop-color="#7542e5"/><stop offset="1" stop-color="#4b2bb0"/></radialGradient>
<linearGradient id="gffhead" gradientUnits="userSpaceOnUse" x1="16" y1="118" x2="34" y2="140"><stop offset="0" stop-color="#ff980e"/><stop offset="0.5" stop-color="#ffa722"/><stop offset="1" stop-color="#ff5a36"/></linearGradient>
<linearGradient id="gtb" gradientUnits="userSpaceOnUse" x1="46" y1="176" x2="22" y2="220"><stop offset="0" stop-color="#1b91f3"/><stop offset="0.55" stop-color="#1373d9"/><stop offset="1" stop-color="#0f5fb6"/></linearGradient>
<linearGradient id="gtbenv" gradientUnits="userSpaceOnUse" x1="32" y1="186" x2="32" y2="212"><stop offset="0" stop-color="#ffffff"/><stop offset="1" stop-color="#a9d6fb"/></linearGradient>
<linearGradient id="gfback" gradientUnits="userSpaceOnUse" x1="11" y1="250" x2="55" y2="242"><stop offset="0" stop-color="#77216f"/><stop offset="0.45" stop-color="#9a3545"/><stop offset="1" stop-color="#f0652a"/></linearGradient>
<linearGradient id="gffront" gradientUnits="userSpaceOnUse" x1="14" y1="248" x2="52" y2="280"><stop offset="0" stop-color="#969696"/><stop offset="1" stop-color="#bdbdbd"/></linearGradient>
<radialGradient id="grb" gradientUnits="userSpaceOnUse" cx="33" cy="332" r="13"><stop offset="0" stop-color="#fbe27a"/><stop offset="0.7" stop-color="#efbb0d"/><stop offset="1" stop-color="#e9b30a"/></radialGradient>
<linearGradient id="gwr" gradientUnits="userSpaceOnUse" x1="16" y1="366" x2="50" y2="410"><stop offset="0" stop-color="#0a649e"/><stop offset="1" stop-color="#43a6d8"/></linearGradient>
<linearGradient id="gbag" x1="0" y1="0" x2="0" y2="1"><stop offset="0" stop-color="#f15619"/><stop offset="1" stop-color="#f57f3f"/></linearGradient>
<linearGradient id="ghelp" gradientUnits="userSpaceOnUse" x1="33" y1="494" x2="33" y2="538"><stop offset="0" stop-color="#1b82dc"/><stop offset="1" stop-color="#3fa3e6"/></linearGradient>
</defs>
<g>
<rect x="14.6" y="45.7" width="36.7" height="44.3" rx="4.0" fill="url(#gdisk)"/>
<rect x="37.4" y="45.7" width="13.9" height="44.3" rx="4.0" fill="#ffffff" fill-opacity="0.12"/>
<circle cx="33.2" cy="64.7" r="15.4" fill="#ececec" stroke="#3b3b3b" stroke-width="1.70"/>
<circle cx="33.2" cy="64.7" r="8.01" fill="#e0e0e0"/>
<circle cx="33.2" cy="64.7" r="4.62" fill="#f6f6f6" stroke="#d2d2d2" stroke-width="0.8"/>
<circle cx="33.2" cy="64.7" r="1.08" fill="#b5b5b5"/>
<path d="M44.4,60.1 A12.2,12.2 0 0 1 24.0,72.7" fill="none" stroke="#e9764e" stroke-width="1.60"/>
<path d="M21.93,85.43 L41.17,73.23 L40.23,71.57 L19.87,81.77 Z" fill="#ffffff"/>
<circle cx="20.9" cy="83.6" r="2.80" fill="#ffffff"/>
<circle cx="21.2" cy="83.6" r="0.75" fill="#9a9a9a"/>
<path d="M13.63,61.64 A10.8,10.8 0 1 1 30.17,61.64 L22.9,69.9 Z" fill="#e95420"/>
<path d="M16.77,51.50 A6.05,6.05 0 0 1 21.69,48.66 M27.24,51.86 A6.05,6.05 0 0 1 27.24,57.54 M21.69,60.74 A6.05,6.05 0 0 1 16.77,57.90 " fill="none" stroke="#ffffff" stroke-width="1.51"/>
<circle cx="15.85" cy="54.70" r="2.11" fill="#fff"/><circle cx="24.92" cy="49.46" r="2.11" fill="#fff"/><circle cx="24.92" cy="59.94" r="2.11" fill="#fff"/>
</g>
<g>
<path d="M39.4,109.4 C34.5,112.5 32.3,117.6 32.6,121.6 C30.4,121.4 28.4,122 26.6,123.2 C26.8,121.2 26.4,119.3 25.8,117.9 C24,118.8 22.3,120.4 21.4,122 C20.8,120.6 20.4,118.6 19.6,116.6 C14.8,120.4 12,127 12,133.4 C12,144.6 21,153.4 32.6,153.4 C44.4,153.4 54,144.6 54,132.4 C54,127.4 52.4,123.2 49.4,119.6 C49.8,121 49.9,122.2 49.8,123.4 C47.6,118 43.4,114.2 39.4,109.4 Z" fill="url(#gffbody)"/>
<path d="M39.4,109.4 C34.5,112.5 32.3,117.6 32.6,121.6 C38,121.6 43,125 44.6,130 C46.4,136 44,143 38,146.5 C46,145.5 52.5,139.5 53.6,131 C54,127.4 52.4,123.2 49.4,119.6 C49.8,121 49.9,122.2 49.8,123.4 C47.6,118 43.4,114.2 39.4,109.4 Z" fill="url(#gffflame)"/>
<circle cx="32.6" cy="131.6" r="9.8" fill="url(#gffglobe)"/>
<path d="M19.6,116.6 C20.4,118.6 20.8,120.6 21.4,122 C22.3,120.4 24,118.8 25.8,117.9 C26.4,119.3 26.8,121.2 26.6,123.2 C28,124.4 30.8,126.2 33,127.6 C32,129.4 29.6,130 27.4,130.4 C25.2,131 23.8,133 23.9,135.4 C22,133.6 20,131.6 17.8,130.6 C15.8,129.6 15,127.6 16.2,126.4 C14.6,126.4 13.2,127.6 12.4,129.4 C13,124.4 15.6,119.8 19.6,116.6 Z" fill="url(#gffhead)"/>
<path d="M36.6,122.4 C39,122.2 41,123.6 41.8,125.6 C40.6,124.8 39.4,124.6 38.2,124.8 C37.8,123.8 37.2,123 36.6,122.4 Z" fill="#b833e1"/>
<ellipse cx="24" cy="128.2" rx="6.2" ry="2" fill="#ffbd2e" fill-opacity="0.75"/>
</g>
<g>
<path d="M24.4,186 C27,179 34.6,173.6 44,173.8 C49,174 52.6,175.4 54.8,177.2 C53.6,177.2 52.4,177.4 51.2,177.8 C53,178.6 54.6,179.8 55.8,181.6 C54.6,181.2 53.4,181.2 52.4,181.4 C55.6,185.6 57.2,190.8 57,196.4 C56.6,209.6 46,219.8 33,219.8 C19.6,219.8 9.2,209.4 9.2,196.6 C9.2,193.4 9.6,190.6 10.4,188.6 C11.2,190 12,191.2 12.8,192.2 C13.6,186.6 15.6,181.8 18,178.6 C20.4,181 22.6,184.6 23.2,188.6 C23.6,187.6 24,186.8 24.4,186 Z" fill="url(#gtb)"/>
<path d="M25.2,186.6 C27.6,180.2 34,175.6 43.6,174.6 C36,176.6 29.6,181 27.2,186.4 C26.4,186.2 25.8,186.4 25.2,186.6 Z" fill="#a78be8" fill-opacity="0.85"/>
<path d="M17.6,192 C14.6,198 15.4,206 20.4,211.6 C17.2,205.4 16.6,198 17.6,192 Z" fill="#a78be8" fill-opacity="0.8"/>
<ellipse cx="32.9" cy="197.6" rx="12.3" ry="11.6" fill="url(#gtbenv)"/>
<path d="M22.6,191.4 C25,188 28.6,186.2 32.9,186.2 C37.2,186.2 40.8,188 43.2,191.4 L34.2,199.8 C33.4,200.5 32.4,200.5 31.6,199.8 Z" fill="#ffffff"/>
<path d="M22.6,191.4 L31.6,199.8 C32.4,200.5 33.4,200.5 34.2,199.8 L43.2,191.4" fill="none" stroke="#9ccbf3" stroke-opacity="0.6" stroke-width="0.8"/>
<path d="M32.4,206.4 C38,207 43.4,205 47.4,200.4 C46.4,206 42,210.2 36.6,211.2 C38.2,210.6 39.2,209.6 39.6,208.6 C37,208.8 34.2,208 32.4,206.4 Z" fill="#1373d9"/>
<path d="M32.4,206.4 C38,207 43.4,205 47.4,200.4 C44.6,205.2 38.6,207.8 32.4,206.4 Z" fill="#8f7fe0" fill-opacity="0.75"/>
<ellipse cx="34.2" cy="180.7" rx="1.7" ry="1" transform="rotate(-18 34.2 180.7)" fill="#ffffff"/>
</g>
<g>
<path d="M11,244 a4,4 0 0 1 4,-4.2 H28.6 c1.4,0 2,0.5 2.8,1.4 l1.2,1.4 c0.6,0.7 1.2,0.9 2.2,0.9 H51.3 a4,4 0 0 1 4,4 V262 H11 Z" fill="url(#gfback)"/>
<rect x="11" y="248" width="44.3" height="32.2" rx="4.2" fill="url(#gffront)"/>
<rect x="11.5" y="248.5" width="43.3" height="31.2" rx="3.8" fill="none" stroke="#cfd4d4" stroke-opacity="0.7"/>
<rect x="27" y="256.8" width="12" height="1.4" rx="0.7" fill="#6f6f6f" transform="translate(0,1.7)"/>
<rect x="27" y="256" width="12" height="2.9" rx="1.45" fill="#fafafa"/>
</g>
<g>
<rect x="14.6" y="301.7" width="36.7" height="44.3" rx="4.5" fill="#e5e2d8"/>
<rect x="15.1" y="302.2" width="35.7" height="43.3" rx="4" fill="none" stroke="#f4f2ea"/>
<circle cx="32.8" cy="324.4" r="15.9" fill="#3c3c40"/>
<circle cx="32.8" cy="324.4" r="13.9" fill="#14141c"/>
<circle cx="32.8" cy="324.4" r="11.3" fill="url(#grb)"/>
<circle cx="32.8" cy="324.4" r="5.2" fill="#0a0a0a"/>
<circle cx="32.8" cy="324.4" r="4.2" fill="#3d3d3d"/>
</g>
<g>
<path d="M19.6,365.7 H35.4 c1.2,0 2,0.3 2.8,1.1 L50,378 c0.9,0.9 1.3,1.7 1.3,2.9 V405 a5,5 0 0 1 -5,5 H19.6 a5,5 0 0 1 -5,-5 V370.7 a5,5 0 0 1 5,-5 Z" fill="url(#gwr)"/>
<path d="M41.6,365.7 H48.3 a3,3 0 0 1 3,3 V374.6 c0,0.9 -0.9,1.2 -1.5,0.6 L41,366.8 c-0.5,-0.5 -0.2,-1.1 0.6,-1.1 Z" fill="#2d8ec4"/>
<path d="M33,365.7 H35.4 c1.2,0 2,0.3 2.8,1.1 L50,378 c0.9,0.9 1.3,1.7 1.3,2.9 V388 H33 Z" fill="#ffffff" fill-opacity="0.1"/>
<path d="M14.6,388 H51.3 V405 a5,5 0 0 1 -5,5 H19.6 a5,5 0 0 1 -5,-5 Z" fill="#ffffff" fill-opacity="0.1"/>
<g fill="#ffffff">
<rect x="21.1" y="382.1" width="7.8" height="1.9" rx="0.5"/>
<rect x="21.1" y="386.1" width="7.8" height="1.9" rx="0.5"/>
<rect x="21.1" y="390.1" width="7.8" height="1.9" rx="0.5"/>
<rect x="21.1" y="394.1" width="23.8" height="1.9" rx="0.5"/>
<rect x="21.1" y="398.1" width="23.8" height="1.9" rx="0.5"/>
<rect x="21.1" y="402.2" width="17.8" height="1.9" rx="0.5"/>
<rect x="31" y="381.8" width="14.1" height="10.3" rx="1.8"/>
</g>
<rect x="32" y="382.8" width="12.1" height="8.3" rx="1" fill="#43b4ec"/>
<path d="M32,391.1 V388.6 L34.6,385.6 L36.4,387.4 L38,389 L39.4,387.9 L40.8,388.9 L42,387.8 L44.1,390 V391.1 Z" fill="#ffffff"/>
</g>
<g>
<path d="M19.6,430.8 H46.7 a2.6,2.6 0 0 1 2.6,2.3 L51.4,470 a3,3 0 0 1 -3,3.3 H17.8 a3,3 0 0 1 -3,-3.3 L17,433.1 a2.6,2.6 0 0 1 2.6,-2.3 Z" fill="url(#gbag)"/>
<path d="M16.3,443.7 H50 L51.4,470 a3,3 0 0 1 -3,3.3 H17.8 a3,3 0 0 1 -3,-3.3 Z" fill="#ffffff" fill-opacity="0.09"/>
<path d="M24.4,433 C24.4,440 28,443.4 33.1,443.4 C38.2,443.4 41.8,440 41.8,433" fill="none" stroke="#f7ebe4" stroke-width="1.7" stroke-linecap="round"/>
<path d="M23.2,469.6 L32.9,447 L42.7,469.6" fill="none" stroke="#fff3ec" stroke-width="4.1" stroke-linejoin="miter" stroke-miterlimit="1.2"/>
<path d="M30.3,447 H35.5" stroke="#fff3ec" stroke-width="0.1" fill="none"/>
<rect x="20.2" y="460.4" width="25.6" height="4" rx="2" fill="#fff6f0"/>
<rect x="22" y="462.1" width="22" height="0.5" fill="#f9b294"/>
</g>
<g>
<circle cx="32.9" cy="516" r="22" fill="url(#ghelp)"/>
<path d="M10.9,517.4 H54.9 A22,22 0 0 1 10.9,517.4 Z" fill="#ffffff" fill-opacity="0.1"/>
<path d="M28.3,505.6 C30,504.6 32,504 34,504 C37.4,504 39.8,506 39.8,509 C39.8,512 37.8,513.8 35.6,516 C33.8,517.8 32.9,519.2 32.9,521.6" fill="none" stroke="#ffffff" stroke-width="2.7"/>
<circle cx="33" cy="527.6" r="2.3" fill="#ffffff"/>
</g>
<rect x="9" y="549" width="48" height="1" fill="#ffffff" fill-opacity="0.22"/>
<rect x="3" y="617" width="60" height="60" rx="13" fill="#ffffff" fill-opacity="0.17"/>
<g><rect x="15" y="560.7" width="36.3" height="44.6" rx="4.5" fill="url(#gssd)"/>
<rect x="15.5" y="561.2" width="35.3" height="43.6" rx="4" fill="none" stroke="#e2e2e2" stroke-opacity="0.75" stroke-width="1"/>
<text x="34.9" y="599.7" text-anchor="middle" font-family="'Liberation Sans',sans-serif" font-size="15.8" letter-spacing="-0.85" fill="#7e7e7e">SSD</text></g>
<g><rect x="15" y="624.7" width="36.3" height="44.6" rx="4.5" fill="url(#gssd)"/>
<rect x="15.5" y="625.2" width="35.3" height="43.6" rx="4" fill="none" stroke="#e2e2e2" stroke-opacity="0.75" stroke-width="1"/>
<text x="34.9" y="663.7" text-anchor="middle" font-family="'Liberation Sans',sans-serif" font-size="15.8" letter-spacing="-0.85" fill="#7e7e7e">SSD</text></g>
<g><rect x="15" y="816.7" width="36.3" height="44.6" rx="4.5" fill="url(#gssd)"/>
<rect x="15.5" y="817.2" width="35.3" height="43.6" rx="4" fill="none" stroke="#e2e2e2" stroke-opacity="0.75" stroke-width="1"/>
<text x="34.9" y="855.7" text-anchor="middle" font-family="'Liberation Sans',sans-serif" font-size="15.8" letter-spacing="-0.85" fill="#7e7e7e">SSD</text></g>
<g><rect x="15" y="880.7" width="36.3" height="44.6" rx="4.5" fill="url(#gssd)"/>
<rect x="15.5" y="881.2" width="35.3" height="43.6" rx="4" fill="none" stroke="#e2e2e2" stroke-opacity="0.75" stroke-width="1"/>
<text x="34.9" y="919.7" text-anchor="middle" font-family="'Liberation Sans',sans-serif" font-size="15.8" letter-spacing="-0.85" fill="#7e7e7e">SSD</text></g>
<g><rect x="15" y="944.7" width="36.3" height="44.6" rx="4.5" fill="url(#gssd)"/>
<rect x="15.5" y="945.2" width="35.3" height="43.6" rx="4" fill="none" stroke="#e2e2e2" stroke-opacity="0.75" stroke-width="1"/>
<text x="34.9" y="983.7" text-anchor="middle" font-family="'Liberation Sans',sans-serif" font-size="15.8" letter-spacing="-0.85" fill="#7e7e7e">SSD</text></g>
<g><rect x="15" y="1008.7" width="36.3" height="44.6" rx="4.5" fill="url(#gssd)"/>
<rect x="15.5" y="1009.2" width="35.3" height="43.6" rx="4" fill="none" stroke="#e2e2e2" stroke-opacity="0.75" stroke-width="1"/>
<text x="34.9" y="1047.7" text-anchor="middle" font-family="'Liberation Sans',sans-serif" font-size="15.8" letter-spacing="-0.85" fill="#7e7e7e">SSD</text></g>
<g><rect x="10.7" y="692.5" width="44.7" height="37" rx="5.5" fill="url(#gflat)"/>
<path d="M10.7,716.8 H55.4 V724.0 a5.5,5.5 0 0 1 -5.5,5.5 H16.2 a5.5,5.5 0 0 1 -5.5,-5.5 Z" fill="#000" fill-opacity="0.16"/>
<rect x="11.2" y="693.0" width="43.7" height="36" rx="5" fill="none" stroke="#d5d5d5" stroke-opacity="0.6"/>
<rect x="14.8" y="720.8" width="36.4" height="4.2" rx="0.8" fill="#4b4b4b"/></g>
<g><rect x="10.7" y="756.5" width="44.7" height="37" rx="5.5" fill="url(#gflat)"/>
<path d="M10.7,780.8 H55.4 V788.0 a5.5,5.5 0 0 1 -5.5,5.5 H16.2 a5.5,5.5 0 0 1 -5.5,-5.5 Z" fill="#000" fill-opacity="0.16"/>
<rect x="11.2" y="757.0" width="43.7" height="36" rx="5" fill="none" stroke="#d5d5d5" stroke-opacity="0.6"/>
<rect x="14.8" y="784.8" width="36.4" height="4.2" rx="0.8" fill="#4b4b4b"/></g>
<circle cx="5.6" cy="583" r="2.7" fill="#df4a16"/><circle cx="5.6" cy="647" r="2.7" fill="#df4a16"/>
<g>
<rect x="15" y="1072.9" width="36.2" height="44.5" rx="4.5" fill="url(#gtrash)"/>
<rect x="15.5" y="1073.4" width="35.2" height="43.5" rx="4" fill="none" stroke="#e6e6e6" stroke-opacity="0.8"/>
<rect x="18" y="1076.3" width="30" height="5.4" rx="2" fill="#7a7a7a"/>
<text x="33.2" y="1110.2" text-anchor="middle" font-family="'DejaVu Sans',sans-serif" font-size="24" fill="#2b8a1e">&#9851;</text>
</g>
<g>
<circle cx="33.6" cy="1404.6" r="14" fill="none" stroke="#f2f2f2" stroke-width="4.6"/>
<g fill="#f2f2f2" stroke="#1c1118" stroke-width="2.2">
<circle cx="19.9" cy="1403.8" r="6.1"/>
<circle cx="40.8" cy="1392.6" r="6.1"/>
<circle cx="39.5" cy="1416.7" r="6.1"/>
</g>
</g>
</svg></div>
<div id="topbar">
<div style="position:absolute;left:15px;top:12px;width:29px;height:8px;border-radius:4px;background:#f2f2f2"></div>
<div style="position:absolute;left:50px;top:13px;width:6px;height:6px;border-radius:3px;background:#8b8b8b"></div>
<div style="position:absolute;top:5.78px;line-height:18px;font-size:14.2px;font-weight:400;color:#f2f2f2;white-space:pre;letter-spacing:-0.215px;left:1112.70px;width:400px;text-align:center;">Aug 18  20:21</div>
<svg width="120" height="32" viewBox="2440 0 120 32" style="position:absolute;left:2440px;top:0">
<g fill="#f2f2f2">
<circle cx="2454" cy="10.9" r="2"/>
<path d="M2447.8,13.9 H2460.2 V15.1 L2456.4,15.6 V22.9 H2454.9 V18.6 H2453.1 V22.9 H2451.6 V15.6 L2447.8,15.1 Z"/>
<path d="M2500.8,13.2 H2503.4 L2507.6,9 V22.8 L2503.4,18.6 H2500.8 Z"/>
</g>
<path d="M2509.8,13 A3.6,3.6 0 0 1 2509.8,18.8" fill="none" stroke="#f2f2f2" stroke-width="1.2"/>
<path d="M2511.8,10.6 A7,7 0 0 1 2511.8,21.2" fill="none" stroke="#9a9a9a" stroke-width="1.2"/>
<path d="M2532.3,11.6 A6,6 0 1 0 2538.7,11.6" fill="none" stroke="#f2f2f2" stroke-width="1.2" stroke-linecap="round"/>
<path d="M2535.5,9 V15.6" fill="none" stroke="#f2f2f2" stroke-width="1.2" stroke-linecap="round"/>
</svg>
</div>
</body></html>
